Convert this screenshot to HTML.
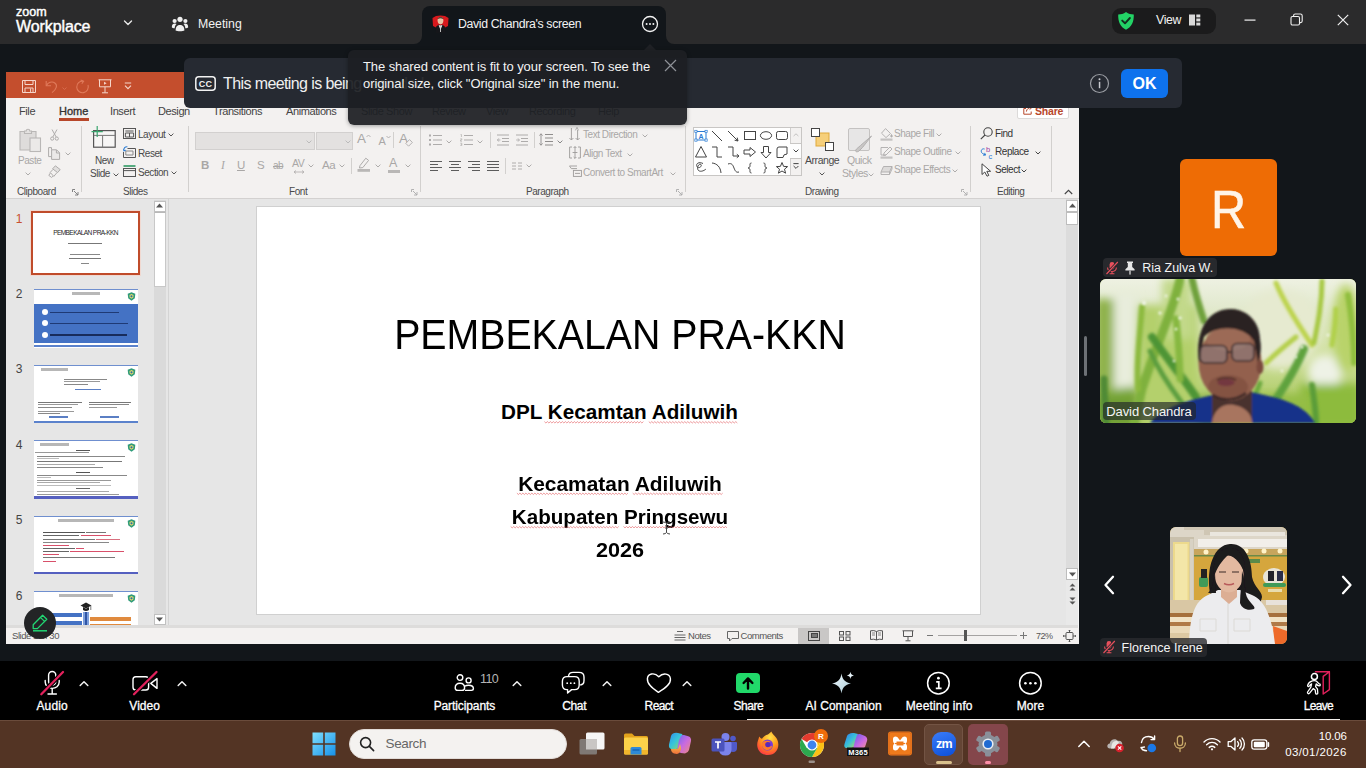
<!DOCTYPE html>
<html>
<head>
<meta charset="utf-8">
<title>Zoom Workplace</title>
<style>
*{box-sizing:border-box;margin:0;padding:0}
html,body{width:1366px;height:768px;overflow:hidden;background:#12161a;font-family:"Liberation Sans",sans-serif;}
.abs{position:absolute}
#root{position:relative;width:1366px;height:768px;overflow:hidden;background:#12161a}
/* ---- top bar ---- */
#topbar{left:0;top:0;width:1366px;height:44px;background:#2b2b2c}
#tab{left:422px;top:6px;width:244px;height:38px;background:#12161a;border-radius:8px 8px 0 0}
.tb-txt{color:#f2f2f2;font-size:12.3px;white-space:nowrap;letter-spacing:-0.35px;line-height:15px}
#viewpill{left:1112px;top:8px;width:104px;height:26px;background:#1b1b1c;border-radius:9px}
/* ---- PPT window ---- */
#ppt{left:6px;top:72px;width:1073px;height:572px;background:#e6e6e6;overflow:hidden}
#ppt-title{left:0;top:0;width:1073px;height:26px;background:#c44e2d}
#ppt-tabs{left:0;top:26px;width:1073px;height:24px;background:#f3f1f0}
#ppt-ribbon{left:0;top:50px;width:1073px;height:77px;background:#f3f1f0;border-bottom:1.500px solid #d3d1d0}
#ppt-status{left:0;top:556px;width:1073px;height:16px;background:#f3f1f0}
.rt{position:absolute;font-size:10px;color:#4a4a4a;white-space:nowrap;letter-spacing:-0.45px;line-height:12px}
.rt.dim{color:#a9a7a6}
.tabt{position:absolute;top:6.5px;font-size:11px;color:#444;white-space:nowrap;letter-spacing:-0.4px;line-height:12px}
.sl{left:251.5px;width:724px;text-align:center;white-space:nowrap;color:#000;line-height:1;transform-origin:50% 50%}
.sl.b{font-weight:bold}
/* ---- banner / tooltip ---- */
#banner{left:184px;top:57.500px;width:998px;height:50px;background:#262a32;border-radius:6px}
#tip{left:347.500px;top:50px;width:339px;height:75px;background:rgba(29,31,35,.935);border-radius:6px;box-shadow:0 1px 4px rgba(0,0,0,.35)}
/* ---- right panel ---- */
.pill{position:absolute;height:18px;background:rgba(41,42,46,.95);border-radius:4px;color:#f5f5f5;font-size:12.5px;white-space:nowrap;line-height:18px}
.ptxt{color:#f5f5f5;font-size:12.500px;line-height:15px;white-space:nowrap;letter-spacing:-0.1px}
/* ---- zoom toolbar ---- */
#ztb{left:0;top:661px;width:1366px;height:59px;background:#000}
.zl{position:absolute;top:38px;font-size:12px;line-height:14px;color:#fff;white-space:nowrap;transform:translateX(-50%);-webkit-text-stroke:0.3px #fff}
/* ---- taskbar ---- */
#task{left:0;top:720px;width:1366px;height:48px;background:#533424;border-top:1px solid #6a4b3b}
</style>
</head>
<body>
<div id="root">

<!-- TOPBAR -->
<div id="topbar" class="abs">
  <!-- zoom workplace logo -->
  <div class="abs" style="left:16px;top:5px;font-size:12.5px;color:#fff;letter-spacing:0px;line-height:14px;-webkit-text-stroke:0.45px #fff">zoom</div>
  <div class="abs" style="left:16px;top:17px;font-size:16px;color:#fff;letter-spacing:-0.1px;line-height:20px;-webkit-text-stroke:0.4px #fff">Workplace</div>
  <svg class="abs" style="left:122px;top:17px" width="12" height="12" viewBox="0 0 12 12"><path d="M2.5 4 L6 7.5 L9.5 4" fill="none" stroke="#e8e8e8" stroke-width="1.4" stroke-linecap="round" stroke-linejoin="round"/></svg>
  <!-- meeting icon -->
  <svg class="abs" style="left:171px;top:15px" width="18" height="18" viewBox="0 0 18 18" fill="#f0f0f0">
    <circle cx="9" cy="4.3" r="2.6"/><circle cx="3.6" cy="6" r="2.1"/><circle cx="14.4" cy="6" r="2.1"/>
    <path d="M4.6 15.5 C4.6 11.6 6.4 10 9 10 C11.6 10 13.4 11.6 13.4 15.5 C12 16.6 6 16.6 4.6 15.5Z"/>
    <path d="M0.8 12.2 C0.8 9.6 2.2 8.6 3.9 8.6 C4.6 8.6 5.2 8.8 5.6 9.1 C4.4 10 3.8 11.4 3.7 13.2 C2.4 13.2 1.3 12.8 0.8 12.2Z"/>
    <path d="M17.2 12.2 C17.2 9.6 15.8 8.6 14.1 8.6 C13.4 8.6 12.8 8.8 12.4 9.1 C13.6 10 14.2 11.4 14.3 13.2 C15.6 13.2 16.7 12.8 17.2 12.2Z"/>
  </svg>
  <div class="abs tb-txt" style="left:198px;top:17px;letter-spacing:0">Meeting</div>
  <!-- tab -->
  <div id="tab" class="abs"></div>
  <svg class="abs" style="left:414px;top:36px" width="8" height="8"><path d="M8 0 L8 8 L0 8 A8 8 0 0 0 8 0Z" fill="#12161a"/></svg>
  <svg class="abs" style="left:666px;top:36px" width="8" height="8"><path d="M0 0 L0 8 L8 8 A8 8 0 0 1 0 0Z" fill="#12161a"/></svg>
  <!-- avatar -->
  <svg class="abs" style="left:432px;top:15px" width="17" height="18" viewBox="0 0 17 18">
    <path d="M0.5 3 L4 1 L8.5 0.5 L13 1 L16.5 3 L16 11 L13 12.5 L4 12.5 L1 11Z" fill="#d8191d"/>
    <ellipse cx="8.5" cy="5.6" rx="2.9" ry="3.7" fill="#e8c4a6"/>
    <path d="M5.6 4 C5.8 1.6 11.2 1.6 11.4 4 C10 3 7 3 5.6 4Z" fill="#2a1c16"/>
    <path d="M3.6 18 L4.2 11.6 L7 9.6 L8.5 10.4 L10 9.6 L12.8 11.6 L13.4 18Z" fill="#15161a"/>
    <path d="M6.6 9.9 L8.5 15 L10.4 9.9 L8.5 10.6Z" fill="#f4f4f4"/>
    <rect x="8.1" y="11" width="0.9" height="6" fill="#d0d0d0"/>
  </svg>
  <div class="abs tb-txt" style="left:458px;top:17px">David Chandra's screen</div>
  <svg class="abs" style="left:640px;top:14px" width="20" height="20" viewBox="0 0 20 20"><circle cx="10" cy="10" r="7.5" fill="none" stroke="#f2f2f2" stroke-width="1.3"/><circle cx="6.6" cy="10" r="1" fill="#f2f2f2"/><circle cx="10" cy="10" r="1" fill="#f2f2f2"/><circle cx="13.4" cy="10" r="1" fill="#f2f2f2"/></svg>
  <!-- view pill -->
  <div id="viewpill" class="abs"></div>
  <svg class="abs" style="left:1117px;top:11px" width="18" height="20" viewBox="0 0 18 20"><path d="M9 1 C11.5 2.8 14 3.4 16.8 3.5 C17 10.5 14.8 15.8 9 18.8 C3.2 15.8 1 10.5 1.2 3.5 C4 3.4 6.5 2.8 9 1Z" fill="#23d366"/><path d="M5.2 9.6 L8 12.3 L12.9 7" fill="none" stroke="#12301f" stroke-width="1.9" stroke-linecap="round" stroke-linejoin="round"/></svg>
  <div class="abs tb-txt" style="left:1156px;top:13px">View</div>
  <svg class="abs" style="left:1189px;top:14px" width="12" height="12" viewBox="0 0 12 12"><rect x="0" y="0.5" width="6" height="11" fill="#d9d9d9"/><rect x="7.3" y="0.5" width="4" height="2.9" fill="#d9d9d9"/><rect x="7.3" y="4.5" width="4" height="2.9" fill="#d9d9d9"/><rect x="7.3" y="8.6" width="4" height="2.9" fill="#d9d9d9"/></svg>
  <!-- window controls -->
  <svg class="abs" style="left:1244px;top:13px" width="14" height="14"><rect x="0.5" y="6.5" width="11" height="1.2" fill="#f0f0f0"/></svg>
  <svg class="abs" style="left:1290px;top:13px" width="14" height="14" viewBox="0 0 14 14"><rect x="1" y="3.5" width="8.5" height="8.5" rx="1.4" fill="none" stroke="#f0f0f0" stroke-width="1.1"/><path d="M3.6 3.3 V2.6 Q3.6 1 5.2 1 H10.4 Q12.2 1 12.2 2.8 V8 Q12.2 9.6 10.6 9.6 H9.8" fill="none" stroke="#f0f0f0" stroke-width="1.1"/></svg>
  <svg class="abs" style="left:1337px;top:14px" width="12" height="12" viewBox="0 0 12 12"><path d="M0.8 0.8 L11.2 11.2 M11.2 0.8 L0.8 11.2" stroke="#f0f0f0" stroke-width="1.2"/></svg>
</div>

<!-- PPT WINDOW -->
<div id="ppt" class="abs">
  <div id="ppt-title" class="abs">
    <!-- save -->
    <svg class="abs" style="left:16px;top:8px" width="14" height="13" viewBox="0 0 14 13" fill="none" stroke="#f6d6cb" stroke-width="1"><path d="M0.5 0.5 H13.5 V12.5 H0.5Z"/><path d="M3 0.5 V4.5 H11 V0.5"/><path d="M3 12.5 V8 H11 V12.5"/><path d="M8.6 8.5 V12"/></svg>
    <!-- undo (dim) -->
    <svg class="abs" style="left:39px;top:8px" width="14" height="14" viewBox="0 0 14 14" fill="none" stroke="#e07a5b" stroke-width="1.1"><path d="M1.2 1 V5.8 H6"/><path d="M1.5 5.6 C3 2.4 7 1 9.8 3 C12.6 5 12 9 7 12.6"/></svg>
    <svg class="abs" style="left:56px;top:15px" width="5" height="3"><path d="M0.5 0.5 L2.5 2.5 L4.5 0.5" fill="none" stroke="#d96e50" stroke-width="0.9"/></svg>
    <!-- redo (dim) -->
    <svg class="abs" style="left:69px;top:7px" width="15" height="15" viewBox="0 0 15 15" fill="none" stroke="#e07a5b" stroke-width="1.1"><path d="M8.2 2.2 A5.8 5.8 0 1 0 13 6"/><path d="M5.6 1 L8.6 2.2 L6.8 4.8"/></svg>
    <!-- present -->
    <svg class="abs" style="left:92px;top:7px" width="14" height="15" viewBox="0 0 14 15" fill="none" stroke="#f6d6cb" stroke-width="1"><path d="M0.5 0.8 H13.5"/><path d="M1.5 0.8 V7.8 H12.5 V0.8"/><path d="M7 7.8 V13.6 M4 13.8 H10"/><path d="M6 2.8 L8.6 4.3 L6 5.8Z" fill="#f6d6cb" stroke="none"/></svg>
    <!-- customize -->
    <svg class="abs" style="left:118px;top:10px" width="8" height="8" viewBox="0 0 8 8" fill="none" stroke="#f6d6cb" stroke-width="1"><path d="M0.8 1 H7.2"/><path d="M1 3.6 L4 6.6 L7 3.6" stroke-width="1.1"/></svg>
  </div>
  <div id="ppt-tabs" class="abs">
    <div class="tabt" style="left:13px">File</div>
    <div class="tabt" style="left:53px;color:#333;letter-spacing:0;-webkit-text-stroke:0.35px #333">Home</div>
    <div class="abs" style="left:53px;top:20px;width:30px;height:3px;background:#b7472a"></div>
    <div class="tabt" style="left:104px">Insert</div>
    <div class="tabt" style="left:152px">Design</div>
    <div class="tabt" style="left:207px">Transitions</div>
    <div class="tabt" style="left:280px">Animations</div>
    <div class="tabt" style="left:355px">Slide Show</div>
    <div class="tabt" style="left:426px">Review</div>
    <div class="tabt" style="left:480px">View</div>
    <div class="tabt" style="left:523px">Recording</div>
    <div class="tabt" style="left:592px">Help</div>
    <!-- share -->
    <div class="abs" style="left:1011px;top:3px;width:52px;height:18px;background:#fff;border:1px solid #dcdad9;border-radius:2px"></div>
    <svg class="abs" style="left:1017px;top:7px" width="10" height="10" viewBox="0 0 10 10" fill="none" stroke="#b7472a" stroke-width="1"><path d="M3 3.5 H0.8 V9.2 H8.2 V6.5"/><path d="M3.4 6.6 C3.6 4 5.4 2.6 8.6 2.6 M6.6 0.6 L8.8 2.6 L6.6 4.6"/></svg>
    <div class="abs" style="left:1029px;top:5.5px;font-size:10.5px;font-weight:bold;color:#b7472a;line-height:14px;letter-spacing:-0.2px">Share</div>
  </div>
  <div id="ppt-ribbon" class="abs">
    <!-- CLIPBOARD -->
    <svg class="abs" style="left:13px;top:6px" width="23" height="25" viewBox="0 0 23 25" fill="none" stroke="#b9b7b6" stroke-width="1.1"><path d="M1 3.500 H17 V22 H1Z" fill="#dedcdb"/><path d="M5.5 5.5 V3 H7.2 C7.2 0.6 10.8 0.6 10.8 3 H12.5 V5.5Z" fill="#e4e2e1"/><rect x="11" y="10" width="10.5" height="13.5" fill="#ebe9e8"/></svg>
    <div class="rt dim" style="left:12px;top:33px">Paste</div>
    <svg class="abs" style="left:19px;top:50px" width="6" height="4"><path d="M0.6 0.6 L3 3 L5.4 0.6" fill="none" stroke="#aeacab" stroke-width="1"/></svg>
    <svg class="abs" style="left:44px;top:7px" width="9" height="12" viewBox="0 0 9 12" fill="none" stroke="#aeacab" stroke-width="1"><path d="M2 0.5 L6.2 8 M7 0.5 L2.8 8"/><circle cx="2.2" cy="9.6" r="1.6"/><circle cx="6.8" cy="9.6" r="1.6"/></svg>
    <svg class="abs" style="left:42px;top:25px" width="13" height="13" viewBox="0 0 13 13" fill="none" stroke="#aeacab" stroke-width="1"><path d="M3.5 2.8 V0.6 H0.6 V9.6 H3.4"/><path d="M3.6 2.8 H8.6 L11.6 5.8 V12.4 H3.6Z" fill="#ebe9e8"/><path d="M8.4 3 V6 H11.4"/></svg>
    <svg class="abs" style="left:59px;top:30px" width="6" height="4"><path d="M0.6 0.6 L3 3 L5.4 0.6" fill="none" stroke="#aeacab" stroke-width="1"/></svg>
    <svg class="abs" style="left:42px;top:43px" width="13" height="13" viewBox="0 0 13 13" fill="none" stroke="#aeacab" stroke-width="1"><path d="M7.4 0.8 L12.2 4.6 L9.6 7.6 L4.6 3.8Z" fill="#e1dfde"/><path d="M5 4.4 L2.2 7.4 L5.8 11.4 L9 7.6"/><path d="M2.4 8 L0.8 10.4 L3.6 12.4 L5.2 11"/></svg>
    <div class="rt" style="left:11px;top:64px">Clipboard</div>
    <svg class="abs" style="left:66px;top:67px" width="7" height="7" viewBox="0 0 7 7" fill="none" stroke="#777" stroke-width="0.9"><path d="M0.5 3 V0.5 H3"/><path d="M2 2 L6 6 M6 3 V6 H3"/></svg>
    <div class="abs" style="left:75px;top:4px;width:1px;height:66px;background:#d2d0ce"></div>
    <!-- SLIDES -->
    <svg class="abs" style="left:85px;top:4px" width="25" height="22" viewBox="0 0 25 22" fill="none"><rect x="2.6" y="4.6" width="21.6" height="16.6" stroke="#555" stroke-width="1.2" fill="#f7f6f5"/><path d="M2.8 9.4 H24 M11.6 9.6 V21" stroke="#777" stroke-width="1"/><path d="M6.2 0 V11 M0.5 5.6 H11.8" stroke="#3aa56e" stroke-width="1.2"/></svg>
    <div class="rt" style="left:89px;top:33.3px">New</div>
    <div class="rt" style="left:84px;top:46px">Slide</div>
    <svg class="abs" style="left:107px;top:51px" width="6" height="4"><path d="M0.6 0.6 L3 3 L5.4 0.6" fill="none" stroke="#555" stroke-width="1"/></svg>
    <svg class="abs" style="left:117px;top:6px" width="13" height="11" viewBox="0 0 13 11" fill="none" stroke="#555" stroke-width="1"><rect x="0.5" y="0.5" width="12" height="10"/><path d="M2.4 3 H10.6 M2.4 5 H10.6 M6.5 5 V9"/><path d="M2.4 5 V9 H10.6 V5"/></svg>
    <div class="rt" style="left:132px;top:7.3px">Layout</div>
    <svg class="abs" style="left:162px;top:11px" width="6" height="4"><path d="M0.6 0.6 L3 3 L5.4 0.6" fill="none" stroke="#555" stroke-width="1"/></svg>
    <svg class="abs" style="left:117px;top:24px" width="13" height="12" viewBox="0 0 13 12" fill="none" stroke="#555" stroke-width="1"><path d="M4.5 2.5 H12.5 V11.5 H0.5 V6"/><path d="M2.8 5 H10 V9 H2.8Z" stroke="#888"/><path d="M4.4 0.8 C2 0.6 0.6 2 0.8 4.4 M0.6 2.8 L0.9 4.8 L2.8 4.2" stroke="#2b7cd3" stroke-width="1.1"/></svg>
    <div class="rt" style="left:132px;top:26.3px">Reset</div>
    <svg class="abs" style="left:117px;top:43px" width="13" height="12" viewBox="0 0 13 12" fill="none" stroke="#555" stroke-width="1"><path d="M0.5 1 H12.5" stroke="#2f9a63" stroke-width="1.6"/><rect x="0.5" y="3.5" width="12" height="8"/><path d="M0.8 5.6 H12.2"/></svg>
    <div class="rt" style="left:132px;top:45.3px">Section</div>
    <svg class="abs" style="left:165px;top:49px" width="6" height="4"><path d="M0.6 0.6 L3 3 L5.4 0.6" fill="none" stroke="#555" stroke-width="1"/></svg>
    <div class="rt" style="left:117px;top:64px">Slides</div>
    <div class="abs" style="left:182px;top:4px;width:1px;height:66px;background:#d2d0ce"></div>
    <!-- FONT -->
    <div class="abs" style="left:189px;top:10px;width:120px;height:18px;background:#e3e1e0;border:1px solid #d2d0cf"></div>
    <svg class="abs" style="left:300px;top:18px" width="6" height="4"><path d="M0.6 0.6 L3 3 L5.4 0.6" fill="none" stroke="#bbb" stroke-width="1"/></svg>
    <div class="abs" style="left:310px;top:10px;width:37px;height:18px;background:#e3e1e0;border:1px solid #d2d0cf"></div>
    <svg class="abs" style="left:339px;top:18px" width="6" height="4"><path d="M0.6 0.6 L3 3 L5.4 0.6" fill="none" stroke="#bbb" stroke-width="1"/></svg>
    <div class="rt dim" style="left:351px;top:11px;font-size:13.500px;letter-spacing:0">A</div><svg class="abs" style="left:360px;top:12px" width="5" height="4"><path d="M0.5 3 L2.5 1 L4.5 3" fill="none" stroke="#aeacab" stroke-width="0.9"/></svg>
    <div class="rt dim" style="left:372.500px;top:13px;font-size:11px;letter-spacing:0">A</div><svg class="abs" style="left:380px;top:13px" width="5" height="4"><path d="M0.5 1 L2.5 3 L4.5 1" fill="none" stroke="#aeacab" stroke-width="0.9"/></svg>
    <div class="abs" style="left:387px;top:10px;width:1px;height:16px;background:#d2d0ce"></div>
    <div class="rt dim" style="left:393px;top:11px;font-size:13.500px;letter-spacing:0">A</div>
    <svg class="abs" style="left:399px;top:17px" width="8" height="8" viewBox="0 0 8 8" fill="#f3f1f0" stroke="#aeacab" stroke-width="0.9"><path d="M4.5 0.6 L7.4 3.4 L3.6 7.2 L0.8 4.4Z"/></svg>
    <div class="rt dim" style="left:195px;top:37px;font-size:11.5px;font-weight:bold">B</div>
    <div class="rt dim" style="left:215px;top:37px;font-size:11.5px;font-style:italic;font-family:'Liberation Serif',serif">I</div>
    <div class="rt dim" style="left:231px;top:37px;font-size:11.5px;text-decoration:underline">U</div>
    <div class="rt dim" style="left:251px;top:37px;font-size:11.5px">S</div>
    <div class="rt dim" style="left:267px;top:38px;font-size:10px;text-decoration:line-through">ab</div>
    <div class="rt dim" style="left:286px;top:35px;font-size:10.5px">AV</div>
    <svg class="abs" style="left:287px;top:48px" width="12" height="4"><path d="M1 2 H11 M3 0.5 L1 2 L3 3.5 M9 0.5 L11 2 L9 3.5" fill="none" stroke="#aeacab" stroke-width="0.8"/></svg>
    <svg class="abs" style="left:302px;top:42px" width="6" height="4"><path d="M0.6 0.6 L3 3 L5.4 0.6" fill="none" stroke="#aeacab" stroke-width="1"/></svg>
    <div class="rt dim" style="left:316px;top:37px;font-size:11.5px">Aa</div>
    <svg class="abs" style="left:333px;top:42px" width="6" height="4"><path d="M0.6 0.6 L3 3 L5.4 0.6" fill="none" stroke="#aeacab" stroke-width="1"/></svg>
    <div class="abs" style="left:345px;top:36px;width:1px;height:16px;background:#d2d0ce"></div>
    <svg class="abs" style="left:351px;top:35px" width="14" height="15" viewBox="0 0 14 15"><path d="M3 8.6 L8.8 1.2 L11.6 3.4 L5.8 10.6 L2.4 11Z" fill="none" stroke="#aeacab" stroke-width="1"/><rect x="0.5" y="12" width="12.5" height="2.8" fill="#b9b7b6"/></svg>
    <svg class="abs" style="left:369px;top:42px" width="6" height="4"><path d="M0.6 0.6 L3 3 L5.4 0.6" fill="none" stroke="#aeacab" stroke-width="1"/></svg>
    <div class="rt dim" style="left:383px;top:35px;font-size:12.5px;letter-spacing:0">A</div>
    <div class="abs" style="left:382px;top:48px;width:12px;height:3px;background:#b9b7b6"></div>
    <svg class="abs" style="left:399px;top:42px" width="6" height="4"><path d="M0.6 0.6 L3 3 L5.4 0.6" fill="none" stroke="#aeacab" stroke-width="1"/></svg>
    <div class="rt" style="left:283px;top:64px">Font</div>
    <svg class="abs" style="left:405px;top:67px" width="7" height="7" viewBox="0 0 7 7" fill="none" stroke="#aaa" stroke-width="0.9"><path d="M0.5 3 V0.5 H3"/><path d="M2 2 L6 6 M6 3 V6 H3"/></svg>
    <div class="abs" style="left:414px;top:4px;width:1px;height:66px;background:#d2d0ce"></div>
    <!-- PARAGRAPH -->
    <svg class="abs" style="left:423px;top:12px" width="13" height="12" viewBox="0 0 13 12" stroke="#aeacab" fill="#aeacab"><rect x="0" y="0.5" width="2" height="2" stroke="none"/><rect x="0" y="5" width="2" height="2" stroke="none"/><rect x="0" y="9.5" width="2" height="2" stroke="none"/><path d="M4 1.5 H13 M4 6 H13 M4 10.5 H13" stroke-width="1"/></svg>
    <svg class="abs" style="left:440px;top:18px" width="6" height="4"><path d="M0.6 0.6 L3 3 L5.4 0.6" fill="none" stroke="#aeacab" stroke-width="1"/></svg>
    <svg class="abs" style="left:454px;top:12px" width="13" height="12" viewBox="0 0 13 12" stroke="#aeacab" fill="none"><path d="M4 1.5 H13 M4 6 H13 M4 10.5 H13" stroke-width="1"/><path d="M0.6 0.4 H1.4 V3 M0.3 4.8 H1.8 V6 H0.4 V7.2 H2 M0.3 9.2 H1.8 V11.6 H0.3 M0.8 10.4 H1.8" stroke-width="0.7"/></svg>
    <svg class="abs" style="left:471px;top:18px" width="6" height="4"><path d="M0.6 0.6 L3 3 L5.4 0.6" fill="none" stroke="#aeacab" stroke-width="1"/></svg>
    <div class="abs" style="left:484px;top:10px;width:1px;height:16px;background:#d2d0ce"></div>
    <svg class="abs" style="left:491px;top:12px" width="12" height="12" viewBox="0 0 12 12" stroke="#aeacab" fill="none"><path d="M0 1 H12 M5 4.5 H12 M5 7.5 H12 M0 11 H12" stroke-width="1"/><path d="M3.4 6 H0.4 M1.8 4.4 L0.4 6 L1.8 7.6" stroke-width="0.9"/></svg>
    <svg class="abs" style="left:510px;top:12px" width="12" height="12" viewBox="0 0 12 12" stroke="#aeacab" fill="none"><path d="M0 1 H12 M5 4.5 H12 M5 7.5 H12 M0 11 H12" stroke-width="1"/><path d="M0.2 6 H3.4 M2 4.4 L3.4 6 L2 7.6" stroke-width="0.9"/></svg>
    <div class="abs" style="left:528px;top:10px;width:1px;height:16px;background:#d2d0ce"></div>
    <svg class="abs" style="left:533px;top:11px" width="14" height="13" viewBox="0 0 14 13" stroke="#8f8d8c" fill="none"><path d="M6 1.5 H14 M6 5 H14 M6 8.5 H14 M6 12 H14" stroke-width="1"/><path d="M2 0.8 V12.2 M0.4 2.6 L2 0.8 L3.6 2.6 M0.4 10.4 L2 12.2 L3.6 10.4" stroke-width="0.9"/></svg>
    <svg class="abs" style="left:551px;top:18px" width="6" height="4"><path d="M0.6 0.6 L3 3 L5.4 0.6" fill="none" stroke="#888" stroke-width="1"/></svg>
    <svg class="abs" style="left:424px;top:38px" width="12" height="12"><path d="M0 1.5 H12 M0 4.5 H8 M0 7.5 H12 M0 10.5 H8" stroke="#5c5c5c" stroke-width="1" fill="none"/></svg><svg class="abs" style="left:443px;top:38px" width="12" height="12"><path d="M0 1.5 H12 M2 4.5 H10 M0 7.5 H12 M2 10.5 H10" stroke="#5c5c5c" stroke-width="1" fill="none"/></svg><svg class="abs" style="left:462px;top:38px" width="12" height="12"><path d="M0 1.5 H12 M4 4.5 H12 M0 7.5 H12 M4 10.5 H12" stroke="#5c5c5c" stroke-width="1" fill="none"/></svg><svg class="abs" style="left:481px;top:38px" width="12" height="12"><path d="M0 1.5 H12 M0 4.5 H12 M0 7.5 H12 M0 10.5 H12" stroke="#5c5c5c" stroke-width="1" fill="none"/></svg>
    <div class="abs" style="left:499px;top:36px;width:1px;height:16px;background:#d2d0ce"></div>
    <svg class="abs" style="left:506px;top:40px" width="10" height="8"><path d="M0 1 H4 M6 1 H10 M0 4 H4 M6 4 H10 M0 7 H4 M6 7 H10" stroke="#aeacab" stroke-width="1"/></svg>
    <svg class="abs" style="left:520px;top:42px" width="6" height="4"><path d="M0.6 0.6 L3 3 L5.4 0.6" fill="none" stroke="#aeacab" stroke-width="1"/></svg>
    <svg class="abs" style="left:563px;top:5px" width="12" height="14" viewBox="0 0 12 14" stroke="#9c9a99" fill="none" stroke-width="0.9"><path d="M2.4 1 V13 M0.4 11 L2.4 13 L4.4 11 M8.6 3 V13 M6.6 11 L8.6 13 L10.6 11"/><path d="M6.4 3.4 L8 0.4 L9.6 3.4" stroke-width="0.7"/></svg>
    <div class="rt dim" style="left:577px;top:7px">Text Direction</div><svg class="abs" style="left:636px;top:12px" width="6" height="4"><path d="M0.6 0.6 L3 3 L5.4 0.6" fill="none" stroke="#aeacab" stroke-width="1"/></svg>
    <svg class="abs" style="left:563px;top:24px" width="12" height="13" viewBox="0 0 12 13" stroke="#9c9a99" fill="none" stroke-width="0.9"><path d="M3 1 H0.6 V12 H3 M9 1 H11.4 V12 H9"/><path d="M6 0.6 V12.4 M4.6 2 L6 0.6 L7.4 2 M4.6 11 L6 12.4 L7.4 11"/><path d="M3.6 6.5 H8.4"/></svg>
    <div class="rt dim" style="left:577px;top:26px">Align Text</div><svg class="abs" style="left:621px;top:31px" width="6" height="4"><path d="M0.6 0.6 L3 3 L5.4 0.6" fill="none" stroke="#aeacab" stroke-width="1"/></svg>
    <svg class="abs" style="left:563px;top:43px" width="13" height="12" viewBox="0 0 13 12" stroke="#9c9a99" fill="none" stroke-width="0.9"><path d="M0.4 1 H8 M2.4 3.6 H8 M2.4 3.6 L0.6 1.2"/><rect x="4.4" y="5.4" width="8" height="6"/><path d="M6 8.4 H11"/></svg>
    <div class="rt dim" style="left:577px;top:45px">Convert to SmartArt</div><svg class="abs" style="left:664px;top:50px" width="6" height="4"><path d="M0.6 0.6 L3 3 L5.4 0.6" fill="none" stroke="#aeacab" stroke-width="1"/></svg>
    <div class="rt" style="left:520px;top:64px">Paragraph</div>
    <svg class="abs" style="left:670px;top:67px" width="7" height="7" viewBox="0 0 7 7" fill="none" stroke="#aaa" stroke-width="0.9"><path d="M0.5 3 V0.5 H3"/><path d="M2 2 L6 6 M6 3 V6 H3"/></svg>
    <div class="abs" style="left:679px;top:4px;width:1px;height:66px;background:#d2d0ce"></div>
    <!-- DRAWING : shapes gallery -->
    <div class="abs" style="left:687.300px;top:5px;width:108.400px;height:49px;background:#fff;border:1px solid #c8c6c4"></div>
    <div class="abs" style="left:784.200px;top:6px;width:10.500px;height:47px;background:#f3f1f0;border-left:1px solid #d0cecd"></div>
    <div class="abs" style="left:784.200px;top:21px;width:10.500px;height:16px;border-top:1px solid #c8c6c4;border-bottom:1px solid #c8c6c4;background:#fdfdfd"></div>
    <svg class="abs" style="left:786.500px;top:11px" width="6" height="4"><path d="M0.6 3 L3 0.8 L5.4 3" fill="none" stroke="#c3c1c0" stroke-width="1"/></svg>
    <svg class="abs" style="left:787px;top:27px" width="6" height="4"><path d="M0.6 0.6 L3 3 L5.4 0.6" fill="none" stroke="#444" stroke-width="1"/></svg>
    <svg class="abs" style="left:786.500px;top:41px" width="6" height="7"><path d="M0.4 0.6 H5.6" stroke="#444" stroke-width="1"/><path d="M0.6 3 L3 5.4 L5.4 3" fill="none" stroke="#444" stroke-width="1"/></svg>
    <svg class="abs" style="left:686.600px;top:6px" width="96" height="47" viewBox="0 0 96 47" fill="none" stroke="#444" stroke-width="1">
      <rect x="3" y="3.5" width="10" height="8.5" stroke="#2b7cd3"/><text x="8" y="11" font-family="Liberation Sans" font-size="7" fill="#2b7cd3" stroke="none" text-anchor="middle" font-weight="bold">A</text>
      <rect x="1.8" y="2.3" width="2.2" height="2.2" fill="#fff" stroke="#2b7cd3" stroke-width="0.7"/><rect x="12" y="2.3" width="2.2" height="2.2" fill="#fff" stroke="#2b7cd3" stroke-width="0.7"/><rect x="1.8" y="11" width="2.2" height="2.2" fill="#fff" stroke="#2b7cd3" stroke-width="0.7"/><rect x="12" y="11" width="2.2" height="2.2" fill="#fff" stroke="#2b7cd3" stroke-width="0.7"/>
      <path d="M19 3 L29 13"/>
      <path d="M35 3 L45 13 M45 13 L41.6 12.2 M45 13 L44.2 9.6"/>
      <rect x="51.500" y="3.5" width="11" height="8"/>
      <ellipse cx="73" cy="7.5" rx="5.6" ry="3.8"/>
      <rect x="83.500" y="3.5" width="11" height="8" rx="1.8"/>
      <path d="M8 18.500 L13.5 29 H2.5Z"/>
      <path d="M19 19 H24 V29 H29"/>
      <path d="M35 19 H40 V28 H46 M46 28 L43.8 26.200 M46 28 L43.8 29.800"/>
      <path d="M51 22 H57 V19.500 L62.500 24 L57 28.500 V26 H51Z"/>
      <path d="M70.500 18.500 H75.500 V24.500 H78 L73 30 L68 24.500 H70.500Z"/>
      <path d="M84 21 Q84 19 86 19 H94 V26 Q90 26 90 29.500 H84Z"/>
      <path d="M10 35.500 C6 33.500 2.500 35.500 4 38.500 C5.500 41.500 9.500 38 8 36.500 C6 35 3 40 5.500 42.500 C8 44.500 12 42 13 41"/>
      <path d="M19 35 C24 35.500 27.500 39 28 45"/>
      <path d="M35 36 C39 34.500 40 37.500 41 40 C42 42.500 43 45 46 44"/>
      <path d="M58.500 35 C56.500 35 57 36.500 57 37.800 C57 39.500 56 39.800 55 40 C56 40.200 57 40.500 57 42.200 C57 43.500 56.500 45 58.500 45"/>
      <path d="M70.500 35 C72.500 35 72 36.500 72 37.800 C72 39.500 73 39.800 74 40 C73 40.200 72 40.500 72 42.200 C72 43.500 72.500 45 70.500 45"/>
      <path d="M89 34.500 L90.600 38.400 L94.600 38.600 L91.500 41.200 L92.600 45.200 L89 43 L85.400 45.200 L86.500 41.200 L83.400 38.600 L87.400 38.400Z"/>
    </svg>
    <!-- arrange -->
    <svg class="abs" style="left:805px;top:6px" width="23" height="23" viewBox="0 0 23 23"><rect x="5" y="5" width="13" height="13" fill="#f6cf7a" stroke="#e0a93a" stroke-width="1"/><rect x="0.5" y="0.5" width="8" height="8" fill="#fff" stroke="#444" stroke-width="1"/><rect x="14.500" y="14.500" width="8" height="8" fill="#fff" stroke="#444" stroke-width="1"/></svg>
    <div class="rt" style="left:799px;top:32px;font-size:10.500px">Arrange</div>
    <svg class="abs" style="left:813px;top:50px" width="6" height="4"><path d="M0.6 0.6 L3 3 L5.4 0.6" fill="none" stroke="#555" stroke-width="1"/></svg>
    <!-- quick styles -->
    <svg class="abs" style="left:842px;top:6px" width="24" height="25" viewBox="0 0 24 25"><rect x="0.5" y="0.5" width="21" height="22" rx="1.500" fill="#e7e6e6" stroke="#c4c2c1" stroke-width="1"/><path d="M23.500 8 L14.500 19.500 L11 23 C8.500 24.800 6.500 23.500 8.500 21 L12.500 17.500Z" fill="#c9c7c6" stroke="#aeacab" stroke-width="0.9"/></svg>
    <div class="rt dim" style="left:841px;top:32px;font-size:10.500px">Quick</div>
    <div class="rt dim" style="left:836px;top:45px;font-size:10.500px">Styles</div>
    <svg class="abs" style="left:862px;top:51px" width="6" height="4"><path d="M0.6 0.6 L3 3 L5.4 0.6" fill="none" stroke="#aeacab" stroke-width="1"/></svg>
    <svg class="abs" style="left:874px;top:6px" width="13" height="13" viewBox="0 0 13 13" fill="none" stroke="#aeacab" stroke-width="0.9"><path d="M5.500 0.600 L10.500 5.500 L6 9.600 L1.500 5.200Z"/><path d="M11.500 6.500 C12.500 8 12.500 9 11.500 9 C10.500 9 10.500 8 11.500 6.500Z" fill="#aeacab"/><rect x="0.500" y="10.500" width="12" height="2.200" fill="#c4c2c1" stroke="none"/></svg>
    <div class="rt dim" style="left:888px;top:6px">Shape Fill</div><svg class="abs" style="left:930px;top:11px" width="6" height="4"><path d="M0.6 0.6 L3 3 L5.4 0.6" fill="none" stroke="#aeacab" stroke-width="1"/></svg>
    <svg class="abs" style="left:874px;top:24px" width="13" height="13" viewBox="0 0 13 13" fill="none" stroke="#aeacab" stroke-width="0.9"><path d="M1 1.500 H8 M1 1.500 V9 H6"/><path d="M10 1 L12 3 L6 9 L3.600 9.400 L4 7Z"/><rect x="0.500" y="10.500" width="12" height="2.200" fill="#c4c2c1" stroke="none"/></svg>
    <div class="rt dim" style="left:888px;top:24px">Shape Outline</div><svg class="abs" style="left:949px;top:29px" width="6" height="4"><path d="M0.6 0.6 L3 3 L5.4 0.6" fill="none" stroke="#aeacab" stroke-width="1"/></svg>
    <svg class="abs" style="left:874px;top:43px" width="13" height="12" viewBox="0 0 13 12" fill="#dddbda" stroke="#aeacab" stroke-width="0.9"><path d="M3.500 1.500 H12 L9.500 7 H1Z"/><path d="M1 7 V9.500 H9.500 V7 M9.500 9.500 L12 4 V1.500" fill="none"/></svg>
    <div class="rt dim" style="left:888px;top:42px">Shape Effects</div><svg class="abs" style="left:946px;top:47px" width="6" height="4"><path d="M0.6 0.6 L3 3 L5.4 0.6" fill="none" stroke="#aeacab" stroke-width="1"/></svg>
    <div class="rt" style="left:799px;top:64px">Drawing</div>
    <svg class="abs" style="left:955px;top:67px" width="7" height="7" viewBox="0 0 7 7" fill="none" stroke="#aaa" stroke-width="0.9"><path d="M0.5 3 V0.5 H3"/><path d="M2 2 L6 6 M6 3 V6 H3"/></svg>
    <div class="abs" style="left:964px;top:4px;width:1px;height:66px;background:#d2d0ce"></div>
    <!-- EDITING -->
    <svg class="abs" style="left:974px;top:5px" width="13" height="13" viewBox="0 0 13 13" fill="none" stroke="#444" stroke-width="1.100"><circle cx="8" cy="5" r="4.200"/><path d="M5 8 L0.800 12.200"/></svg>
    <div class="rt" style="left:989px;top:6px;color:#333">Find</div>
    <svg class="abs" style="left:974px;top:23px" width="14" height="14" viewBox="0 0 14 14" fill="none"><text x="6" y="6.500" font-family="Liberation Sans" font-size="7.500" fill="#a33aa0">b</text><text x="8.500" y="13.500" font-family="Liberation Sans" font-size="7.500" fill="#2b7cd3">c</text><path d="M4.600 4 C1.500 3 0 6.500 2.500 8.500 L5.500 10 M5.500 10 L3.200 10.300 M5.500 10 L4.600 7.900" stroke="#2b7cd3" stroke-width="1"/></svg>
    <div class="rt" style="left:989px;top:24px;color:#333">Replace</div><svg class="abs" style="left:1029px;top:29px" width="6" height="4"><path d="M0.6 0.6 L3 3 L5.4 0.6" fill="none" stroke="#444" stroke-width="1"/></svg>
    <svg class="abs" style="left:975px;top:41px" width="11" height="14" viewBox="0 0 11 14" fill="#fff" stroke="#444" stroke-width="1"><path d="M1 0.800 V11.500 L3.800 9 L6 13.200 L7.800 12.400 L5.800 8.300 H9.600Z"/></svg>
    <div class="rt" style="left:989px;top:42px;color:#333">Select</div><svg class="abs" style="left:1015px;top:47px" width="6" height="4"><path d="M0.6 0.6 L3 3 L5.4 0.6" fill="none" stroke="#444" stroke-width="1"/></svg>
    <div class="rt" style="left:991px;top:64px">Editing</div>
    <div class="abs" style="left:1045px;top:4px;width:1px;height:66px;background:#d2d0ce"></div>
    <svg class="abs" style="left:1058px;top:67px" width="9" height="6"><path d="M0.800 5 L4.500 1.300 L8.200 5" fill="none" stroke="#444" stroke-width="1.100"/></svg>
  </div>
  <div class="abs" style="left:0;top:127px;width:162px;height:429px;background:#e6e6e6"></div>
  <div class="abs" style="left:162px;top:127px;width:1px;height:429px;background:#d4d4d4"></div>
  <div class="abs" style="left:163px;top:127px;width:896px;height:426px;background:#e6e6e6"></div>
  <div class="abs" style="left:0;top:553px;width:1073px;height:3px;background:#dddcdb"></div>
  <div class="abs" style="left:8px;top:139.5px;width:10px;text-align:center;font-size:12px;color:#c8502f;line-height:14px">1</div><div class="abs" style="left:8px;top:214.9px;width:10px;text-align:center;font-size:12px;color:#444;line-height:14px">2</div><div class="abs" style="left:8px;top:290.3px;width:10px;text-align:center;font-size:12px;color:#444;line-height:14px">3</div><div class="abs" style="left:8px;top:365.7px;width:10px;text-align:center;font-size:12px;color:#444;line-height:14px">4</div><div class="abs" style="left:8px;top:441.1px;width:10px;text-align:center;font-size:12px;color:#444;line-height:14px">5</div><div class="abs" style="left:8px;top:516.5px;width:10px;text-align:center;font-size:12px;color:#444;line-height:14px">6</div>
  <!-- thumb scrollbar -->
  <div class="abs" style="left:148px;top:128px;width:11.700px;height:425px;background:#dadada"></div>
  <div class="abs" style="left:148px;top:128.500px;width:11.700px;height:11px;background:#fff;border:1px solid #c0c0c0"></div>
  <svg class="abs" style="left:150px;top:131px" width="7" height="5"><path d="M0 4.500 L3.500 0.500 L7 4.500Z" fill="#555"/></svg>
  <div class="abs" style="left:148px;top:139.500px;width:11.700px;height:75px;background:#fff;border:1px solid #c8c8c8;border-top:1.500px solid #b8b8b8"></div>
  <div class="abs" style="left:148px;top:542px;width:11.700px;height:11px;background:#fff;border:1px solid #c0c0c0"></div>
  <svg class="abs" style="left:150px;top:545px" width="7" height="5"><path d="M0 0.500 L3.500 4.500 L7 0.500Z" fill="#555"/></svg>
  <!-- thumb 1 (selected) -->
  <div class="abs" style="left:25px;top:139px;width:109px;height:64px;background:#fff;border:2.500px solid #c04c2b;box-shadow:0 0 0 1px #f0d9d1"></div>
  <div class="abs" style="left:47px;top:156.500px;width:65px;text-align:center;font-size:6.600px;line-height:8px;color:#262626;letter-spacing:-0.620px;white-space:nowrap">PEMBEKALAN PRA-KKN</div>
  <div class="abs" style="left:62px;top:171px;width:34px;height:1px;background:#777"></div><div class="abs" style="left:64px;top:181.5px;width:30px;height:1px;background:#888"></div><div class="abs" style="left:63px;top:186px;width:32px;height:1px;background:#777"></div><div class="abs" style="left:75px;top:190.5px;width:8px;height:1px;background:#888"></div>
  <!-- thumb 2 -->
  <div class="abs" style="left:27.500px;top:217.400px;width:104px;height:58.500px;background:#fff;overflow:hidden">
    <div class="abs" style="left:0;top:0;width:104px;height:1px;background:#6f8fcf"></div>
    <div class="abs" style="left:38px;top:2.500px;width:28px;height:3px;background:#9a9a9a;opacity:.7"></div>
    <div class="abs" style="left:0;top:14.500px;width:104px;height:39px;background:#4472c4"></div>
    <div class="abs" style="left:0;top:55.500px;width:104px;height:2px;background:#5b82cc"></div>
    <div class="abs" style="left:8px;top:20px;width:6px;height:6px;border-radius:50%;background:#fff"></div>
    <div class="abs" style="left:8px;top:31px;width:6px;height:6px;border-radius:50%;background:#fff"></div>
    <div class="abs" style="left:8px;top:42.500px;width:6px;height:6px;border-radius:50%;background:#fff"></div>
    <div class="abs" style="left:16px;top:22.500px;width:69px;height:1.500px;background:#1f3a75"></div>
    <div class="abs" style="left:16px;top:33.500px;width:78px;height:1.500px;background:#1f3a75"></div>
    <div class="abs" style="left:16px;top:45px;width:77px;height:1.800px;background:#182c5c"></div>
  </div>
  <svg class="abs" style="left:120.5px;top:220px" width="9" height="9" viewBox="0 0 9 9"><path d="M4.500 0.300 L8.300 1.800 L7.800 6.200 L4.500 8.700 L1.200 6.200 L0.700 1.800Z" fill="#2f9b7a"/><path d="M2.500 3 L4.500 2 L6.500 3 L6.300 5.500 L4.500 6.800 L2.700 5.500Z" fill="#e8dc6a"/><circle cx="4.500" cy="4.300" r="1.100" fill="#2a6fa8"/></svg>
  <!-- thumb 3 -->
  <div class="abs" style="left:27.500px;top:292.800px;width:104px;height:58.500px;background:#fff;overflow:hidden">
    <div class="abs" style="left:0;top:0;width:104px;height:1px;background:#6f8fcf"></div>
    <div class="abs" style="left:7px;top:3.500px;width:27px;height:3px;background:#999;opacity:.7"></div>
    <div class="abs" style="left:30px;top:14px;width:43px;height:1px;background:#888"></div><div class="abs" style="left:30px;top:16.5px;width:36px;height:1px;background:#999"></div><div class="abs" style="left:30px;top:19px;width:24px;height:1px;background:#888"></div><div class="abs" style="left:41px;top:24px;width:26px;height:1.5px;background:#5b7fc4"></div>
    <div class="abs" style="left:4px;top:37px;width:44px;height:1px;background:#777"></div><div class="abs" style="left:4px;top:39.5px;width:40px;height:1px;background:#999"></div><div class="abs" style="left:4px;top:42px;width:34px;height:1px;background:#888"></div><div class="abs" style="left:4px;top:46px;width:36px;height:1px;background:#999"></div><div class="abs" style="left:4px;top:48.5px;width:22px;height:1px;background:#888"></div><div class="abs" style="left:15px;top:51.5px;width:19px;height:1.5px;background:#5b7fc4"></div>
    <div class="abs" style="left:55px;top:37px;width:42px;height:1px;background:#777"></div><div class="abs" style="left:55px;top:39.5px;width:40px;height:1px;background:#888"></div><div class="abs" style="left:55px;top:42px;width:28px;height:1px;background:#999"></div><div class="abs" style="left:66px;top:51.5px;width:19px;height:1.5px;background:#5b7fc4"></div>
    <div class="abs" style="left:0;top:56.500px;width:104px;height:2px;background:#5b82cc"></div>
  </div>
  <svg class="abs" style="left:120.5px;top:295.5px" width="9" height="9" viewBox="0 0 9 9"><path d="M4.500 0.300 L8.300 1.800 L7.800 6.200 L4.500 8.700 L1.200 6.200 L0.700 1.800Z" fill="#2f9b7a"/><path d="M2.500 3 L4.500 2 L6.500 3 L6.300 5.500 L4.500 6.800 L2.700 5.500Z" fill="#e8dc6a"/><circle cx="4.500" cy="4.300" r="1.100" fill="#2a6fa8"/></svg>
  <!-- thumb 4 -->
  <div class="abs" style="left:27.500px;top:368.200px;width:104px;height:58.500px;background:#fff;overflow:hidden">
    <div class="abs" style="left:0;top:0;width:104px;height:1px;background:#6f8fcf"></div>
    <div class="abs" style="left:6px;top:3px;width:29px;height:3px;background:#999;opacity:.7"></div>
    <div class="abs" style="left:42px;top:9.5px;width:14px;height:1px;background:#555"></div><div class="abs" style="left:1px;top:12px;width:54px;height:1px;background:#999"></div><div class="abs" style="left:3px;top:15.5px;width:88px;height:1px;background:#888"></div><div class="abs" style="left:3px;top:18px;width:22px;height:1px;background:#bbb"></div><div class="abs" style="left:3px;top:21px;width:85px;height:1px;background:#777"></div><div class="abs" style="left:3px;top:24px;width:58px;height:1px;background:#aaa"></div><div class="abs" style="left:3px;top:26.5px;width:66px;height:1px;background:#888"></div>
    <div class="abs" style="left:42px;top:31.5px;width:14px;height:1px;background:#555"></div><div class="abs" style="left:3px;top:34.5px;width:90px;height:1px;background:#888"></div><div class="abs" style="left:3px;top:37px;width:14px;height:1px;background:#bbb"></div><div class="abs" style="left:3px;top:39.5px;width:74px;height:1px;background:#999"></div><div class="abs" style="left:3px;top:42px;width:63px;height:1px;background:#aaa"></div><div class="abs" style="left:3px;top:44.5px;width:74px;height:1px;background:#bbb"></div>
    <div class="abs" style="left:42px;top:48px;width:14px;height:1px;background:#666"></div><div class="abs" style="left:3px;top:51px;width:72px;height:1px;background:#aaa"></div><div class="abs" style="left:3px;top:53.5px;width:82px;height:1px;background:#999"></div>
    <div class="abs" style="left:0;top:56px;width:104px;height:2.500px;background:#5560c0"></div>
  </div>
  <svg class="abs" style="left:120.5px;top:371px" width="9" height="9" viewBox="0 0 9 9"><path d="M4.500 0.300 L8.300 1.800 L7.800 6.200 L4.500 8.700 L1.200 6.200 L0.700 1.800Z" fill="#2f9b7a"/><path d="M2.500 3 L4.500 2 L6.500 3 L6.300 5.500 L4.500 6.800 L2.700 5.500Z" fill="#e8dc6a"/><circle cx="4.500" cy="4.300" r="1.100" fill="#2a6fa8"/></svg>
  <!-- thumb 5 -->
  <div class="abs" style="left:27.500px;top:443.600px;width:104px;height:58.500px;background:#fff;overflow:hidden">
    <div class="abs" style="left:0;top:0;width:104px;height:1px;background:#6f8fcf"></div>
    <div class="abs" style="left:24px;top:3px;width:56px;height:3px;background:#999;opacity:.7"></div>
    <div class="abs" style="left:9px;top:16.5px;width:42px;height:1px;background:#555"></div><div class="abs" style="left:52px;top:16.5px;width:20px;height:1px;background:#777"></div>
    <div class="abs" style="left:9px;top:19.5px;width:36px;height:1px;background:#666"></div><div class="abs" style="left:47px;top:19.5px;width:30px;height:1px;background:#d8506a"></div>
    <div class="abs" style="left:9px;top:23px;width:52px;height:1px;background:#777"></div><div class="abs" style="left:62px;top:23px;width:24px;height:1px;background:#d8707f"></div>
    <div class="abs" style="left:9px;top:26px;width:66px;height:1px;background:#888"></div>
    <div class="abs" style="left:9px;top:29px;width:26px;height:1px;background:#d8506a"></div>
    <div class="abs" style="left:9px;top:32px;width:32px;height:1px;background:#666"></div><div class="abs" style="left:42px;top:32px;width:8px;height:1px;background:#d8506a"></div>
    <div class="abs" style="left:9px;top:35.5px;width:26px;height:1px;background:#666"></div><div class="abs" style="left:36px;top:35.5px;width:54px;height:1px;background:#d8506a"></div>
    <div class="abs" style="left:9px;top:38.5px;width:16px;height:1px;background:#d8506a"></div>
    <div class="abs" style="left:9px;top:41.5px;width:72px;height:1px;background:#777"></div>
    <div class="abs" style="left:9px;top:45px;width:13px;height:1px;background:#d8506a"></div>
    <div class="abs" style="left:0;top:56px;width:104px;height:2.500px;background:#5560c0"></div>
  </div>
  <svg class="abs" style="left:120.5px;top:446.5px" width="9" height="9" viewBox="0 0 9 9"><path d="M4.500 0.300 L8.300 1.800 L7.800 6.200 L4.500 8.700 L1.200 6.200 L0.700 1.800Z" fill="#2f9b7a"/><path d="M2.500 3 L4.500 2 L6.500 3 L6.300 5.500 L4.500 6.800 L2.700 5.500Z" fill="#e8dc6a"/><circle cx="4.500" cy="4.300" r="1.100" fill="#2a6fa8"/></svg>
  <!-- thumb 6 (cut off) -->
  <div class="abs" style="left:27.500px;top:519px;width:104px;height:34px;background:#fff;overflow:hidden">
    <div class="abs" style="left:0;top:0;width:104px;height:1px;background:#6f8fcf"></div>
    <div class="abs" style="left:25px;top:3px;width:54px;height:3px;background:#999;opacity:.7"></div>
    <svg class="abs" style="left:46px;top:11px" width="12" height="10" viewBox="0 0 12 10"><path d="M6 0.500 L11.500 3.500 L6 6.500 L0.500 3.500Z" fill="#222"/><path d="M3 5 V8 Q6 9.800 9 8 V5 L6 6.800Z" fill="#222"/><path d="M10.800 3.800 V8" stroke="#222" stroke-width="0.600"/></svg>
    <div class="abs" style="left:49px;top:21px;width:6px;height:14px;background:#7ea0dc"></div>
    <div class="abs" style="left:51px;top:21px;width:2px;height:14px;background:#2f55a5"></div>
    <div class="abs" style="left:16px;top:22px;width:32px;height:4px;background:#4472c4"></div>
    <div class="abs" style="left:16px;top:30px;width:32px;height:4px;background:#4472c4"></div>
    <div class="abs" style="left:56px;top:26px;width:41px;height:4px;background:#e08a3e"></div>
    <div class="abs" style="left:56px;top:33px;width:41px;height:2px;background:#e08a3e"></div>
  </div>
  <svg class="abs" style="left:120.5px;top:522px" width="9" height="9" viewBox="0 0 9 9"><path d="M4.500 0.300 L8.300 1.800 L7.800 6.200 L4.500 8.700 L1.200 6.200 L0.700 1.800Z" fill="#2f9b7a"/><path d="M2.500 3 L4.500 2 L6.500 3 L6.300 5.500 L4.500 6.800 L2.700 5.500Z" fill="#e8dc6a"/><circle cx="4.500" cy="4.300" r="1.100" fill="#2a6fa8"/></svg>
  <div class="abs" style="left:250px;top:134px;width:725px;height:409px;background:#fff;border:1px solid #d0d0d0"></div>
  <div class="abs sl" id="s-title" style="top:240.500px;font-size:43.400px;transform:scaleX(0.905)">PEMBEKALAN PRA-KKN</div>
  <div class="abs sl b" id="s-sub" style="top:330px;font-size:20.700px">DPL Kecamtan Adiluwih</div>
  <div class="abs sl b" id="s-l1" style="top:401.800px;font-size:20.500px;transform:scaleX(1.02)">Kecamatan Adiluwih</div>
  <div class="abs sl b" id="s-l2" style="top:435.200px;font-size:20.500px;transform:scaleX(1.005)">Kabupaten Pringsewu</div>
  <div class="abs sl b" id="s-l3" style="top:468px;font-size:20.500px;transform:scaleX(1.055)">2026</div>
  <svg class="abs" style="left:0;top:0" width="1073" height="572"><polyline points="538.4,349.6 539.9,351.0 541.4,349.6 542.9,351.0 544.4,349.6 545.9,351.0 547.4,349.6 548.9,351.0 550.4,349.6 551.9,351.0 553.4,349.6 554.9,351.0 556.4,349.6 557.9,351.0 559.4,349.6 560.9,351.0 562.4,349.6 563.9,351.0 565.4,349.6 566.9,351.0 568.4,349.6 569.9,351.0 571.4,349.6 572.9,351.0 574.4,349.6 575.9,351.0 577.4,349.6 578.9,351.0 580.4,349.6 581.9,351.0 583.4,349.6 584.9,351.0 586.4,349.6 587.9,351.0 589.4,349.6 590.9,351.0 592.4,349.6 593.9,351.0 595.4,349.6 596.9,351.0 598.4,349.6 599.9,351.0 601.4,349.6 602.9,351.0 604.4,349.6 605.9,351.0 607.4,349.6 608.9,351.0 610.4,349.6 611.9,351.0 613.4,349.6 614.9,351.0 616.4,349.6 617.9,351.0 619.4,349.6 620.9,351.0 622.4,349.6 623.9,351.0 625.4,349.6 626.9,351.0 628.4,349.6 629.9,351.0 631.4,349.6 632.9,351.0 634.4,349.6 635.9,351.0 637.4,349.6" fill="none" stroke="#e2575b" stroke-width="0.7" opacity="0.85"/><polyline points="642.8,349.6 644.3,351.0 645.8,349.6 647.3,351.0 648.8,349.6 650.3,351.0 651.8,349.6 653.3,351.0 654.8,349.6 656.3,351.0 657.8,349.6 659.3,351.0 660.8,349.6 662.3,351.0 663.8,349.6 665.3,351.0 666.8,349.6 668.3,351.0 669.8,349.6 671.3,351.0 672.8,349.6 674.3,351.0 675.8,349.6 677.3,351.0 678.8,349.6 680.3,351.0 681.8,349.6 683.3,351.0 684.8,349.6 686.3,351.0 687.8,349.6 689.3,351.0 690.8,349.6 692.3,351.0 693.8,349.6 695.3,351.0 696.8,349.6 698.3,351.0 699.8,349.6 701.3,351.0 702.8,349.6 704.3,351.0 705.8,349.6 707.3,351.0 708.8,349.6 710.3,351.0 711.8,349.6 713.3,351.0 714.8,349.6 716.3,351.0 717.8,349.6 719.3,351.0 720.8,349.6 722.3,351.0 723.8,349.6 725.3,351.0 726.8,349.6 728.3,351.0 729.8,349.6 731.3,351.0" fill="none" stroke="#e2575b" stroke-width="0.7" opacity="0.85"/><polyline points="510.9,421.1 512.4,422.5 513.9,421.1 515.4,422.5 516.9,421.1 518.4,422.5 519.9,421.1 521.4,422.5 522.9,421.1 524.4,422.5 525.9,421.1 527.4,422.5 528.9,421.1 530.4,422.5 531.9,421.1 533.4,422.5 534.9,421.1 536.4,422.5 537.9,421.1 539.4,422.5 540.9,421.1 542.4,422.5 543.9,421.1 545.4,422.5 546.9,421.1 548.4,422.5 549.9,421.1 551.4,422.5 552.9,421.1 554.4,422.5 555.9,421.1 557.4,422.5 558.9,421.1 560.4,422.5 561.9,421.1 563.4,422.5 564.9,421.1 566.4,422.5 567.9,421.1 569.4,422.5 570.9,421.1 572.4,422.5 573.9,421.1 575.4,422.5 576.9,421.1 578.4,422.5 579.9,421.1 581.4,422.5 582.9,421.1 584.4,422.5 585.9,421.1 587.4,422.5 588.9,421.1 590.4,422.5 591.9,421.1 593.4,422.5 594.9,421.1 596.4,422.5 597.9,421.1 599.4,422.5 600.9,421.1 602.4,422.5 603.9,421.1 605.4,422.5 606.9,421.1 608.4,422.5 609.9,421.1 611.4,422.5 612.9,421.1 614.4,422.5 615.9,421.1 617.4,422.5 618.9,421.1 620.4,422.5 621.9,421.1" fill="none" stroke="#e2575b" stroke-width="0.7" opacity="0.85"/><polyline points="626.7,421.1 628.2,422.5 629.7,421.1 631.2,422.5 632.7,421.1 634.2,422.5 635.7,421.1 637.2,422.5 638.7,421.1 640.2,422.5 641.7,421.1 643.2,422.5 644.7,421.1 646.2,422.5 647.7,421.1 649.2,422.5 650.7,421.1 652.2,422.5 653.7,421.1 655.2,422.5 656.7,421.1 658.2,422.5 659.7,421.1 661.2,422.5 662.7,421.1 664.2,422.5 665.7,421.1 667.2,422.5 668.7,421.1 670.2,422.5 671.7,421.1 673.2,422.5 674.7,421.1 676.2,422.5 677.7,421.1 679.2,422.5 680.7,421.1 682.2,422.5 683.7,421.1 685.2,422.5 686.7,421.1 688.2,422.5 689.7,421.1 691.2,422.5 692.7,421.1 694.2,422.5 695.7,421.1 697.2,422.5 698.7,421.1 700.2,422.5 701.7,421.1 703.2,422.5 704.7,421.1 706.2,422.5 707.7,421.1 709.2,422.5 710.7,421.1 712.2,422.5 713.7,421.1 715.2,422.5 716.7,421.1" fill="none" stroke="#e2575b" stroke-width="0.7" opacity="0.85"/><polyline points="504.7,454.5 506.2,455.9 507.7,454.5 509.2,455.9 510.7,454.5 512.2,455.9 513.7,454.5 515.2,455.9 516.7,454.5 518.2,455.9 519.7,454.5 521.2,455.9 522.7,454.5 524.2,455.9 525.7,454.5 527.2,455.9 528.7,454.5 530.2,455.9 531.7,454.5 533.2,455.9 534.7,454.5 536.2,455.9 537.7,454.5 539.2,455.9 540.7,454.5 542.2,455.9 543.7,454.5 545.2,455.9 546.7,454.5 548.2,455.9 549.7,454.5 551.2,455.9 552.7,454.5 554.2,455.9 555.7,454.5 557.2,455.9 558.7,454.5 560.2,455.9 561.7,454.5 563.2,455.9 564.7,454.5 566.2,455.9 567.7,454.5 569.2,455.9 570.7,454.5 572.2,455.9 573.7,454.5 575.2,455.9 576.7,454.5 578.2,455.9 579.7,454.5 581.2,455.9 582.7,454.5 584.2,455.9 585.7,454.5 587.2,455.9 588.7,454.5 590.2,455.9 591.7,454.5 593.2,455.9 594.7,454.5 596.2,455.9 597.7,454.5 599.2,455.9 600.7,454.5 602.2,455.9 603.7,454.5 605.2,455.9 606.7,454.5 608.2,455.9 609.7,454.5 611.2,455.9 612.7,454.5" fill="none" stroke="#e2575b" stroke-width="0.7" opacity="0.85"/><polyline points="617.5,454.5 619.0,455.9 620.5,454.5 622.0,455.9 623.5,454.5 625.0,455.9 626.5,454.5 628.0,455.9 629.5,454.5 631.0,455.9 632.5,454.5 634.0,455.9 635.5,454.5 637.0,455.9 638.5,454.5 640.0,455.9 641.5,454.5 643.0,455.9 644.5,454.5 646.0,455.9 647.5,454.5 649.0,455.9 650.5,454.5 652.0,455.9 653.5,454.5 655.0,455.9 656.5,454.5 658.0,455.9 659.5,454.5 661.0,455.9 662.5,454.5 664.0,455.9 665.5,454.5 667.0,455.9 668.5,454.5 670.0,455.9 671.5,454.5 673.0,455.9 674.5,454.5 676.0,455.9 677.5,454.5 679.0,455.9 680.5,454.5 682.0,455.9 683.5,454.5 685.0,455.9 686.5,454.5 688.0,455.9 689.5,454.5 691.0,455.9 692.5,454.5 694.0,455.9 695.5,454.5 697.0,455.9 698.5,454.5 700.0,455.9 701.5,454.5 703.0,455.9 704.5,454.5 706.0,455.9 707.5,454.5 709.0,455.9 710.5,454.5 712.0,455.9 713.5,454.5 715.0,455.9 716.5,454.5 718.0,455.9 719.5,454.5 721.0,455.9" fill="none" stroke="#e2575b" stroke-width="0.7" opacity="0.85"/></svg>
  <!-- I-beam cursor -->
  <svg class="abs" style="left:656px;top:449px" width="9" height="14" viewBox="0 0 9 14"><path d="M1 1 Q3.500 1 4.500 2.500 Q5.500 1 8 1 M4.500 2.500 V11.500 M1 13 Q3.500 13 4.500 11.500 Q5.500 13 8 13 M3 7 H6" fill="none" stroke="#444" stroke-width="1"/></svg>
  <!-- right scrollbar -->
  <div class="abs" style="left:1060px;top:127px;width:13px;height:426px;background:#dcdcdc"></div>
  <div class="abs" style="left:1060px;top:128px;width:12px;height:11.500px;background:#fff;border:1px solid #bdbdbd"></div>
  <svg class="abs" style="left:1063px;top:131px" width="7" height="5"><path d="M0 4.500 L3.500 0.500 L7 4.500Z" fill="#555"/></svg>
  <div class="abs" style="left:1060px;top:139.500px;width:12px;height:13px;background:#fff;border:1px solid #bdbdbd"></div>
  <div class="abs" style="left:1060px;top:496px;width:12px;height:12px;background:#fff;border:1px solid #bdbdbd"></div>
  <svg class="abs" style="left:1063px;top:500px" width="7" height="5"><path d="M0 0.500 L3.500 4.500 L7 0.500Z" fill="#555"/></svg>
  <div class="abs" style="left:1060px;top:508px;width:13px;height:45px;background:#e9e9e9"></div>
  <svg class="abs" style="left:1063px;top:511px" width="7" height="8" viewBox="0 0 7 8"><path d="M0.500 3.500 L3.500 0.500 L6.500 3.500Z M0.500 7.500 L3.500 4.500 L6.500 7.500Z" fill="#555"/></svg>
  <svg class="abs" style="left:1063px;top:525px" width="7" height="8" viewBox="0 0 7 8"><path d="M0.500 0.500 L3.500 3.500 L6.500 0.500Z M0.500 4.500 L3.500 7.500 L6.500 4.500Z" fill="#555"/></svg>
  <div class="abs" style="left:1072px;top:127px;width:1px;height:445px;background:#f5f5f5"></div>

  
  <div id="ppt-status" class="abs">
    <div class="rt" style="left:6px;top:2px;font-size:9.500px;color:#555">Slide 1 of 30</div>
    <svg class="abs" style="left:668px;top:3px" width="12" height="11" viewBox="0 0 12 11"><path d="M3 0.500 H9 M0.500 4 H11.500 M0.500 6.500 H11.500 M0.500 9 H11.500" stroke="#666" stroke-width="1" fill="none"/></svg>
    <div class="rt" style="left:682px;top:2px;font-size:9.500px;color:#555">Notes</div>
    <svg class="abs" style="left:721px;top:3px" width="12" height="11" viewBox="0 0 12 11"><path d="M0.500 0.500 H11.500 V7.500 H5 L2.500 10 V7.500 H0.500Z" stroke="#666" stroke-width="1" fill="none"/></svg>
    <div class="rt" style="left:734.500px;top:2px;font-size:9.500px;color:#555">Comments</div>
    <div class="abs" style="left:792px;top:0;width:31px;height:16px;background:#c9c7c6"></div>
    <svg class="abs" style="left:802px;top:3px" width="12" height="10" viewBox="0 0 12 10" fill="none" stroke="#444" stroke-width="1"><rect x="0.500" y="0.500" width="11" height="9"/><rect x="3.500" y="2.500" width="6" height="4" fill="#777"/></svg>
    <svg class="abs" style="left:833px;top:3px" width="12" height="10" viewBox="0 0 12 10" fill="none" stroke="#555" stroke-width="1"><rect x="0.500" y="0.500" width="4" height="3.500"/><rect x="7" y="0.500" width="4" height="3.500"/><rect x="0.500" y="6" width="4" height="3.500"/><rect x="7" y="6" width="4" height="3.500"/></svg>
    <svg class="abs" style="left:864px;top:2px" width="13" height="11" viewBox="0 0 13 11" fill="none" stroke="#555" stroke-width="1"><path d="M6.500 1.500 V10 M0.500 0.800 Q4 0 6.500 1.500 Q9 0 12.500 0.800 V9.500 Q9 8.600 6.500 10 Q4 8.600 0.500 9.500Z"/><path d="M2 3 H5 M2 5 H5 M8 3 H11 M8 5 H11" stroke-width="0.700"/></svg>
    <svg class="abs" style="left:896px;top:2px" width="12" height="12" viewBox="0 0 12 12" fill="none" stroke="#555" stroke-width="1"><path d="M0.500 0.800 H11.500 M1.500 1 V6.500 H10.500 V1 M6 6.500 V10.500 M3.500 10.800 H8.500"/></svg>
    <div class="abs" style="left:921px;top:7px;width:6px;height:1px;background:#777"></div>
    <div class="abs" style="left:932px;top:7px;width:79px;height:1px;background:#a5a3a2"></div>
    <div class="abs" style="left:958px;top:2px;width:3px;height:11px;background:#555"></div>
    <div class="abs" style="left:1014px;top:7px;width:7px;height:1px;background:#777"></div><div class="abs" style="left:1017px;top:4px;width:1px;height:7px;background:#777"></div>
    <div class="rt" style="left:1030px;top:2px;font-size:9px;color:#555">72%</div>
    <svg class="abs" style="left:1057px;top:2px" width="13" height="12" viewBox="0 0 13 12" fill="none" stroke="#555" stroke-width="1"><rect x="3" y="2.500" width="7" height="7" rx="1"/><path d="M6.500 0 V2.500 M6.500 9.500 V12 M0 6 H3 M10 6 H13"/><path d="M5.500 1 L6.500 0 L7.500 1 M5.500 11 L6.500 12 L7.500 11 M1 5 L0 6 L1 7 M12 5 L13 6 L12 7" stroke-width="0.700"/></svg>
  </div>
</div>

<!-- BANNER -->
<div id="banner" class="abs">
  <svg class="abs" style="left:11px;top:18px" width="21" height="15" viewBox="0 0 21 15"><rect x="0.8" y="0.8" width="19.4" height="13.4" rx="3" fill="none" stroke="#f2f2f2" stroke-width="1.5"/><text x="10.5" y="11" text-anchor="middle" font-family="Liberation Sans" font-size="9" font-weight="bold" fill="#f2f2f2" letter-spacing="0.3">CC</text></svg>
  <div class="abs" id="bantxt" style="left:39px;top:16px;font-size:16px;letter-spacing:-0.6px;color:#f0f0f0;white-space:nowrap;line-height:20px">This meeting is being recorded</div>
  <svg class="abs" style="left:905px;top:15px" width="21" height="21" viewBox="0 0 21 21"><circle cx="10.5" cy="10.5" r="9" fill="none" stroke="#9a9da3" stroke-width="1.2"/><rect x="9.8" y="8.8" width="1.5" height="6.4" fill="#c9cbd0"/><circle cx="10.5" cy="6.2" r="1" fill="#c9cbd0"/></svg>
  <div class="abs" style="left:937px;top:11px;width:47px;height:29px;background:#0e72ed;border-radius:6px;color:#fff;font-weight:bold;font-size:16px;line-height:29px;text-align:center">OK</div>
</div>
<!-- TOOLTIP -->
<svg class="abs" style="left:643px;top:43px" width="14" height="8"><path d="M0 8 L7 1 L14 8Z" fill="#1f2125"/></svg>
<div id="tip" class="abs">
  <div class="abs" id="tiptxt" style="left:15.500px;top:8px;font-size:13px;letter-spacing:-0.09px;line-height:17px;color:#f3f3f3;white-space:nowrap">The shared content is fit to your screen. To see the<br>original size, click "Original size" in the menu.</div>
  <svg class="abs" style="left:316.500px;top:9px" width="13" height="13" viewBox="0 0 13 13"><path d="M1 1 L12 12 M12 1 L1 12" stroke="#8e9197" stroke-width="1.2"/></svg>
</div>

<!-- RIGHT PANEL -->
<!-- handle -->
<div class="abs" style="left:1084px;top:336px;width:3px;height:40px;background:#6d7176;border-radius:1.500px"></div>
<!-- R avatar -->
<div class="abs" style="left:1180px;top:159px;width:97px;height:97px;background:#ee6c05;border-radius:6px"></div>
<div class="abs" id="ravt" style="left:1179.500px;top:181.500px;width:97px;text-align:center;font-size:54px;line-height:1;color:#fff4e8;-webkit-text-stroke:0.6px #fff4e8;transform:scaleX(0.9)">R</div>
<div class="pill" style="left:1102.500px;top:258px;width:114.500px;height:18.500px"></div>
<svg class="abs" style="left:1105px;top:260.5px" width="14" height="14" viewBox="0 0 14 14"><rect x="4.600" y="1" width="4.800" height="7.600" rx="2.400" fill="#e8505c"/><path d="M2.600 6.500 C2.600 11.800 11.400 11.800 11.400 6.500 M7 10.600 V12.800 M4.600 12.800 H9.400" fill="none" stroke="#e8505c" stroke-width="1.100"/><path d="M1.500 13 L12.800 1" stroke="#26282e" stroke-width="2.600"/><path d="M1.500 13 L12.800 1" stroke="#e8505c" stroke-width="1.100"/></svg>
<svg class="abs" style="left:1124px;top:261px" width="12" height="14" viewBox="0 0 12 14"><path d="M3 0.500 H9 V2 H8.200 V6 L10.600 8.300 V9.600 H1.400 V8.300 L3.800 6 V2 H3Z" fill="#e6e6e6"/><rect x="5.400" y="9.600" width="1.200" height="4" fill="#e6e6e6"/></svg>
<div class="abs ptxt" style="left:1142.300px;top:260.700px;letter-spacing:0">Ria Zulva W.</div>
<!-- David video -->
<div class="abs" id="vid1" style="left:1100px;top:279px;width:256px;height:144px;border-radius:6px;overflow:hidden;background:#b9cf6a">
<svg class="abs" style="left:0;top:0" width="256" height="144" viewBox="0 0 256 144">
  <defs>
    <filter id="b4" x="-20%" y="-20%" width="140%" height="140%"><feGaussianBlur stdDeviation="4"/></filter>
    <filter id="b2" x="-20%" y="-20%" width="140%" height="140%"><feGaussianBlur stdDeviation="1.800"/></filter>
    <filter id="b1" x="-20%" y="-20%" width="140%" height="140%"><feGaussianBlur stdDeviation="1.300"/></filter>
    <linearGradient id="bg1" x1="0" y1="0" x2="0" y2="1"><stop offset="0" stop-color="#eef1e2"/><stop offset="0.180" stop-color="#e3ead0"/><stop offset="0.550" stop-color="#cfdf9c"/><stop offset="1" stop-color="#9cc04a"/></linearGradient>
  </defs>
  <rect width="256" height="144" fill="url(#bg1)"/>
  <g filter="url(#b4)">
    <rect x="-5" y="20" width="22" height="130" fill="#8fb24c"/>
    <rect x="14" y="14" width="22" height="100" fill="#e8eddc"/>
    <ellipse cx="30" cy="128" rx="34" ry="20" fill="#7daa38"/><rect x="-4" y="118" width="120" height="30" fill="#6f9e34"/>
    <rect x="38" y="26" width="60" height="124" fill="#b4d06c"/><rect x="62" y="0" width="30" height="60" fill="#c2d98a"/>
    <ellipse cx="180" cy="50" rx="40" ry="40" fill="#e6ead0"/>
    <ellipse cx="225" cy="93" rx="17" ry="17" fill="#eef2e6"/>
    <rect x="200" y="105" width="60" height="45" fill="#8dbb3e"/>
    <rect x="150" y="115" width="60" height="35" fill="#94bd45"/>
    <ellipse cx="246" cy="50" rx="14" ry="45" fill="#b9d36a"/>
  </g>
  <g filter="url(#b2)" fill="none" stroke-linecap="round">
    <path d="M80 0 C74 30 58 60 42 110 L34 144" stroke="#7fb13c" stroke-width="9"/>
    <path d="M92 0 C96 18 100 30 104 42" stroke="#6ea03a" stroke-width="7"/>
    <path d="M42 28 C40 60 36 80 38 110" stroke="#8cba3e" stroke-width="6"/>
    <path d="M52 58 C66 78 84 100 96 118" stroke="#4e9436" stroke-width="8"/>
    <path d="M50 72 C58 90 70 108 82 124" stroke="#5a9c3c" stroke-width="5"/>
    <path d="M76 40 C78 60 80 80 80 100" stroke="#86b840" stroke-width="7"/>
    <path d="M176 4 C186 28 200 48 212 66" stroke="#bcd34c" stroke-width="5"/>
    <path d="M222 2 C222 24 218 44 214 64" stroke="#a6c840" stroke-width="5"/>
    <path d="M204 70 C196 90 184 108 176 120" stroke="#5fa23c" stroke-width="8"/>
    <path d="M196 58 C186 66 174 76 166 84" stroke="#b4cf4a" stroke-width="5"/>
    <path d="M248 16 C252 40 254 60 254 84" stroke="#8fbe3c" stroke-width="6"/>
    <path d="M236 30 C236 44 234 56 232 66" stroke="#b0d048" stroke-width="5"/>
    <path d="M212 106 C214 120 216 132 216 144" stroke="#5a9c38" stroke-width="6"/>
    <path d="M4 100 C4 116 6 130 6 144" stroke="#4f8a34" stroke-width="7"/>
    <path d="M160 104 C158 110 156 114 154 118" stroke="#6aa83c" stroke-width="5"/>
  </g>
  <g filter="url(#b1)" fill="#f4f8ee" opacity="0.850"><circle cx="78" cy="20" r="1.600"/><circle cx="80" cy="39" r="1.800"/><circle cx="76" cy="50" r="1.500"/><circle cx="60" cy="34" r="1.700"/><circle cx="66" cy="17" r="1.400"/><circle cx="74" cy="82" r="1.300"/><circle cx="202" cy="68" r="1.600"/><circle cx="182" cy="92" r="1.400"/><circle cx="196" cy="78" r="1.200"/><circle cx="44" cy="24" r="2.200"/><circle cx="228" cy="56" r="1.600"/></g>
  <!-- person -->
  <g filter="url(#b1)">
    <path d="M50 144 C62 128 92 120 114 116 L150 113 C176 118 204 124 215 144Z" fill="#12308a"/>
    <path d="M112 112 H152 V144 H112Z" fill="#4a322e"/>
    <path d="M112 144 C114 128 126 124 134 126 C146 128 152 136 152 144Z" fill="#a8745f"/>
    <ellipse cx="130" cy="84" rx="31.500" ry="38" fill="#93604d"/>
    <ellipse cx="128" cy="60" rx="22" ry="12" fill="#a0705a" opacity="0.700"/>
    <path d="M99 84 C94 46 112 29 132 30 C150 31 160 46 160 60 C162 70 160 78 158 84 L154 62 C146 48 118 44 104 58Z" fill="#2b2221"/>
    <ellipse cx="160" cy="88" rx="3.500" ry="7" fill="#7a4a3c"/>
    <rect x="100" y="66.500" width="27" height="17.500" rx="5" fill="#8f8a92" fill-opacity="0.450" stroke="#3a2c2e" stroke-width="1.600"/>
    <rect x="132" y="64.500" width="22" height="17.500" rx="5" fill="#8f8a92" fill-opacity="0.450" stroke="#3a2c2e" stroke-width="1.600"/>
    <path d="M127 73 H132" stroke="#3a2c2e" stroke-width="1.800"/>
    <ellipse cx="128" cy="108" rx="20" ry="12" fill="#7a4a3c" opacity="0.600"/><ellipse cx="126" cy="103.500" rx="8.500" ry="3.600" fill="#733840"/>
    <path d="M117 101 C122 98 131 98 136 101" stroke="#4a2a28" stroke-width="1.500" fill="none"/>
    <path d="M113 116 C122 122 136 122 146 114" stroke="#3a2826" stroke-width="2.500" fill="none"/>
  </g>
</svg>
</div>
<div class="pill" style="left:1102.700px;top:402.300px;width:93px;background:rgba(34,38,40,.66)"></div>
<div class="abs ptxt" style="left:1106.300px;top:403.600px;font-size:13px;letter-spacing:-0.100px">David Chandra</div>
<!-- Florence tile -->
<div class="abs" id="vid2" style="left:1170px;top:527px;width:117px;height:117px;border-radius:6px;overflow:hidden;background:#d9b45a">
<svg class="abs" style="left:0;top:0" width="117" height="117" viewBox="0 0 117 117">
  <defs><filter id="c1" x="-20%" y="-20%" width="140%" height="140%"><feGaussianBlur stdDeviation="0.700"/></filter></defs>
  <g filter="url(#c1)">
  <rect width="117" height="117" fill="#d9b75e"/>
  <!-- ceiling -->
  <rect x="0" y="0" width="117" height="24" fill="#ddd6c8"/>
  <path d="M14 0 H117 V8 H34 V3 H14Z" fill="#cfc6b4"/>
  <rect x="28" y="12" width="89" height="8" fill="#f2efea"/>
  <rect x="40" y="5" width="75" height="4" fill="#eae6de"/>
  <rect x="22" y="22" width="95" height="7" fill="#c7a55c"/>
  <circle cx="36" cy="25" r="2.500" fill="#fff3c8"/><circle cx="76" cy="24" r="2.500" fill="#fff3c8"/><circle cx="94" cy="24" r="2.500" fill="#fff3c8"/><circle cx="110" cy="24" r="2.500" fill="#fff3c8"/>
  <!-- left wall -->
  <rect x="0" y="10" width="24" height="76" fill="#c9c0ac"/>
  <rect x="3" y="15" width="16.500" height="64" fill="#ecd98c"/>
  <rect x="5" y="17" width="12.500" height="60" fill="#f3e6a8"/>
  <rect x="20" y="12" width="3.500" height="72" fill="#d8d2c4"/>
  <!-- backdrop -->
  <rect x="24" y="29" width="93" height="44" fill="#d5a63c"/>
  <rect x="24" y="28" width="93" height="1.500" fill="#6b8a4a"/>
  <rect x="29" y="50" width="9" height="10" rx="2" fill="#3f9a58"/>
  <rect x="31" y="42" width="6" height="9" fill="#222"/>
  <ellipse cx="104" cy="50" rx="11" ry="9" fill="#e8e4d8"/>
  <rect x="93" y="56" width="23" height="4" rx="2" fill="#3f9a58"/>
  <rect x="98" y="44" width="6" height="10" fill="#20242a"/><rect x="107" y="44" width="6" height="10" fill="#2a2e4a"/>
  <rect x="98" y="62" width="14" height="3" fill="#e8dcae"/>
  <rect x="78" y="32" width="12" height="4" fill="#5a8a4a"/>
  <!-- lower -->
  <rect x="0" y="73" width="117" height="44" fill="#d9c7a4"/>
  <rect x="96" y="73" width="21" height="5" fill="#e8e2da"/>
  <rect x="0" y="86" width="117" height="4" fill="#a56f3e"/>
  <rect x="0" y="90" width="117" height="5" fill="#f1e3c6"/>
  <rect x="0" y="95" width="117" height="4" fill="#b07a46"/>
  <rect x="0" y="99" width="117" height="7" fill="#ead9b8"/>
  <rect x="0" y="106" width="117" height="11" fill="#dcc8a2"/>
  <path d="M103 99 L117 104 V117 H104Z" fill="#ee6a2a"/>
  <!-- person: hair back -->
  <path d="M40 66 C36 40 44 18 60 17 C76 16 82 34 82 50 C84 60 92 64 92 70 C90 80 84 84 76 82 L44 70Z" fill="#1f1a1b"/>
  <!-- shirt -->
  <path d="M19 117 C20 90 24 74 38 68 L48 63 L70 63 L82 68 C96 74 102 92 105 117Z" fill="#ececee"/>
  <path d="M58 74 V117" stroke="#d8d6d2" stroke-width="1"/>
  <path d="M30 92 H46 V104 H30Z M64 92 H80 V104 H64Z" fill="none" stroke="#dcdad6" stroke-width="1"/>
  <!-- neck -->
  <path d="M51 58 H67 V70 L59 77 L51 70Z" fill="#dcae94"/>
  <!-- face -->
  <ellipse cx="59" cy="47" rx="14.500" ry="18.500" fill="#e3b9a0"/>
  <!-- hair front -->
  <path d="M44 50 C42 30 50 20 62 21 C72 22 76 34 75 48 C72 38 66 30 58 28 C52 34 47 40 44 50Z" fill="#1f1a1b"/>
  <path d="M72 44 C76 56 74 66 78 72 C82 78 86 80 84 82 C78 84 72 82 70 76 C70 66 72 56 72 44Z" fill="#1f1a1b"/>
  <path d="M45 46 C43 56 42 62 38 66 L46 66Z" fill="#1f1a1b"/>
  <path d="M49 45 H56 M62 45 H69" stroke="#3a2a28" stroke-width="1.200"/>
  <path d="M54 56.500 Q59 59 64 56.500" stroke="#b85a5a" stroke-width="1.400" fill="none"/>
  </g>
</svg>
</div>
<div class="pill" style="left:1099.500px;top:637.500px;width:107.500px;height:19px;background:rgba(41,42,46,.8)"></div>
<svg class="abs" style="left:1102px;top:640px" width="14" height="14" viewBox="0 0 14 14"><rect x="4.600" y="1" width="4.800" height="7.600" rx="2.400" fill="#e8505c"/><path d="M2.600 6.500 C2.600 11.800 11.400 11.800 11.400 6.500 M7 10.600 V12.800 M4.600 12.800 H9.400" fill="none" stroke="#e8505c" stroke-width="1.100"/><path d="M1.500 13 L12.800 1" stroke="#26282e" stroke-width="2.600"/><path d="M1.500 13 L12.800 1" stroke="#e8505c" stroke-width="1.100"/></svg>
<div class="abs ptxt" style="left:1121.500px;top:641px;letter-spacing:0.050px">Florence Irene</div>
<!-- arrows -->
<svg class="abs" style="left:1103px;top:575px" width="12" height="20" viewBox="0 0 12 20"><path d="M10 1.800 L2.500 10 L10 18.200" fill="none" stroke="#fff" stroke-width="2.300" stroke-linecap="round" stroke-linejoin="round"/></svg>
<svg class="abs" style="left:1341px;top:575px" width="12" height="20" viewBox="0 0 12 20"><path d="M2 1.800 L9.500 10 L2 18.200" fill="none" stroke="#fff" stroke-width="2.300" stroke-linecap="round" stroke-linejoin="round"/></svg>


<!-- annotate button -->
<div class="abs" style="left:24px;top:607px;width:32px;height:32px;border-radius:50%;background:#232426"></div>
<svg class="abs" style="left:31px;top:613px" width="18" height="20" viewBox="0 0 18 20" fill="none" stroke="#22d673" stroke-width="1.300" stroke-linejoin="round"><path d="M2.200 11.800 L11.600 2.200 L15.800 6.200 L6.400 15.600 L2.200 15.600Z"/><path d="M9.400 4.400 L13.600 8.400"/><path d="M2 17.800 H16" stroke-width="1.500"/></svg>
<!-- ZOOM TOOLBAR -->
<div id="ztb" class="abs">
  <!-- audio -->
  <svg class="abs" style="left:38px;top:8px" width="28" height="28" viewBox="0 0 28 28" fill="none" stroke="#fff" stroke-width="1.400" stroke-linecap="round"><rect x="10.600" y="2.500" width="7.200" height="13.500" rx="3.600"/><path d="M7.200 11.500 V13 C7.200 21.500 21.200 21.500 21.200 13 V11.500"/><path d="M14.200 19.600 V24.800 M10 25 H18.400"/><path d="M3.300 25.300 L25 3" stroke="#000" stroke-width="4.500"/><path d="M3.300 25.300 L25 3" stroke="#e2215c" stroke-width="2.300"/></svg>
  <svg class="abs" style="left:79px;top:19px" width="10" height="7" viewBox="0 0 10 7"><path d="M1.200 5.500 L5 1.700 L8.800 5.500" fill="none" stroke="#f2f2f2" stroke-width="1.500" stroke-linecap="round" stroke-linejoin="round"/></svg>
  <!-- video -->
  <svg class="abs" style="left:130px;top:8px" width="30" height="28" viewBox="0 0 30 28" fill="none" stroke="#fff" stroke-width="1.400" stroke-linejoin="round"><rect x="3" y="7.800" width="15.600" height="13.200" rx="2.800"/><path d="M20.800 14.400 L27 9.600 V19.400Z"/><path d="M4 25.300 L26.500 3" stroke="#000" stroke-width="4.500" stroke-linecap="round"/><path d="M4 25.300 L26.500 3" stroke="#e2215c" stroke-width="2.300" stroke-linecap="round"/></svg>
  <svg class="abs" style="left:177px;top:19px" width="10" height="7" viewBox="0 0 10 7"><path d="M1.200 5.500 L5 1.700 L8.800 5.500" fill="none" stroke="#f2f2f2" stroke-width="1.500" stroke-linecap="round" stroke-linejoin="round"/></svg>
  <!-- participants -->
  <svg class="abs" style="left:454px;top:12px" width="21" height="20" viewBox="0 0 21 20" fill="none" stroke="#fff" stroke-width="1.400"><circle cx="6" cy="4.600" r="2.800"/><circle cx="14.600" cy="7.400" r="2.500"/><path d="M1.200 15 C1.200 11.600 3 10.200 6 10.200 C9 10.200 10.600 11.600 10.600 15 C10.600 16.800 9.600 17.400 8 17.400 H3.800 C2.200 17.400 1.200 16.800 1.200 15Z"/><path d="M10.900 13.200 C11.800 12.400 13 12.200 14.600 12.200 C17.600 12.200 19.400 13.200 19.400 15.600 C19.400 17 18.600 17.400 17.400 17.400 H11"/></svg>
  <div class="abs" style="left:480px;top:11px;font-size:12.500px;line-height:15px;color:#b4b4b4;letter-spacing:-0.600px">110</div>
  <svg class="abs" style="left:512px;top:19px" width="10" height="7" viewBox="0 0 10 7"><path d="M1.200 5.500 L5 1.700 L8.800 5.500" fill="none" stroke="#f2f2f2" stroke-width="1.500" stroke-linecap="round" stroke-linejoin="round"/></svg>
  <!-- chat -->
  <svg class="abs" style="left:561px;top:10px" width="25" height="24" viewBox="0 0 25 24" fill="none" stroke="#fff" stroke-width="1.400" stroke-linejoin="round"><path d="M7.500 5.200 C7.800 2.600 9.400 1.400 12 1.400 H18 C21.400 1.400 23 3 23 6 V9.600 C23 12.400 21.600 13.800 19.200 14"/><path d="M6 5.600 H13.600 C16.600 5.600 18.200 7.200 18.200 10.200 V14 C18.200 17 16.600 18.600 13.600 18.600 H10.600 L6.600 22 V18.600 H6 C3 18.600 1.400 17 1.400 14 V10.200 C1.400 7.200 3 5.600 6 5.600Z"/><circle cx="6.200" cy="12.200" r="0.900" fill="#fff" stroke="none"/><circle cx="9.800" cy="12.200" r="0.900" fill="#fff" stroke="none"/><circle cx="13.400" cy="12.200" r="0.900" fill="#fff" stroke="none"/></svg>
  <svg class="abs" style="left:602px;top:19px" width="10" height="7" viewBox="0 0 10 7"><path d="M1.200 5.500 L5 1.700 L8.800 5.500" fill="none" stroke="#f2f2f2" stroke-width="1.500" stroke-linecap="round" stroke-linejoin="round"/></svg>
  <!-- react -->
  <svg class="abs" style="left:646px;top:11px" width="26" height="22" viewBox="0 0 26 22" fill="none" stroke="#fff" stroke-width="1.400" stroke-linejoin="round"><path d="M12.400 20.400 C6 16 1 12 1.400 6.600 C1.800 2 8 -0.400 12.800 4.800 C17.200 0.400 23.600 1.600 24.400 6.600 C25.200 12 18.800 16.400 12.400 20.400Z"/></svg>
  <svg class="abs" style="left:682px;top:19px" width="10" height="7" viewBox="0 0 10 7"><path d="M1.200 5.500 L5 1.700 L8.800 5.500" fill="none" stroke="#f2f2f2" stroke-width="1.500" stroke-linecap="round" stroke-linejoin="round"/></svg>
  <!-- share -->
  <div class="abs" style="left:736px;top:12px;width:24px;height:20px;background:#21d96a;border-radius:4px"></div>
  <svg class="abs" style="left:741px;top:15px" width="14" height="14" viewBox="0 0 14 14"><path d="M7 12.500 V3 M2.600 7 L7 2.400 L11.400 7" fill="none" stroke="#000" stroke-width="2.400" stroke-linejoin="round" stroke-linecap="round"/></svg>
  <!-- AI companion -->
  <svg class="abs" style="left:831px;top:10px" width="24" height="24" viewBox="0 0 24 24"><defs><linearGradient id="aig" x1="0" y1="0" x2="1" y2="1"><stop offset="0" stop-color="#f4fbff"/><stop offset="1" stop-color="#a9ccd8"/></linearGradient></defs><path d="M10.500 2.500 C11.500 8.800 13.700 11 20 12.500 C13.700 14 11.500 16.200 10.500 22.500 C9.500 16.200 7.300 14 1 12.500 C7.300 11 9.500 8.800 10.500 2.500Z" fill="url(#aig)"/><path d="M19.400 0.800 C19.800 3.200 20.600 4 23 4.400 C20.600 4.800 19.800 5.600 19.400 8 C19 5.600 18.200 4.800 15.800 4.400 C18.200 4 19 3.200 19.400 0.800Z" fill="#e8f4fa"/></svg>
  <!-- meeting info -->
  <svg class="abs" style="left:926px;top:9.500px" width="25" height="25" viewBox="0 0 25 25" fill="none"><circle cx="12.400" cy="12.200" r="10.800" stroke="#fff" stroke-width="1.500"/><path d="M10.200 10.800 H12.800 V17.200 M9.800 17.400 H15.600" stroke="#fff" stroke-width="1.700"/><circle cx="12.400" cy="7.200" r="1.400" fill="#fff"/></svg>
  <!-- more -->
  <svg class="abs" style="left:1017.500px;top:9.500px" width="25" height="25" viewBox="0 0 25 25" fill="none"><circle cx="12.400" cy="12.200" r="10.800" stroke="#fff" stroke-width="1.500"/><circle cx="7.400" cy="12.200" r="1.300" fill="#fff"/><circle cx="12.400" cy="12.200" r="1.300" fill="#fff"/><circle cx="17.400" cy="12.200" r="1.300" fill="#fff"/></svg>
  <!-- leave -->
  <svg class="abs" style="left:1305px;top:9px" width="27" height="26" viewBox="0 0 27 26" fill="none" stroke-linejoin="round" stroke-linecap="round"><path d="M10.500 1.800 H24.400 V19.600 L18.200 24 V6.400 L24.400 1.800" stroke="#e2215c" stroke-width="1.400"/><circle cx="9.400" cy="6.600" r="3" stroke="#fff" stroke-width="1.500"/><path d="M7.400 10.800 C4.600 11.600 3.200 13.200 2.600 15.400 C2.400 16.600 4 17 4.600 15.800 C5 14.800 5.600 14.200 6.600 13.800 L5.800 17.400 L2.600 22 C2 23.200 3.600 24.400 4.600 23.200 L8.200 18.600 L10.200 20 L10.600 23.200 C10.800 24.600 12.800 24.400 12.800 23 L12.400 18.800 L10.600 16.600 L11.200 14 C12 15 12.800 15.600 14.200 15.800 C15.600 15.800 15.600 14 14.400 13.800 C13.400 13.600 12.800 12.600 12 11.600 C11 10.600 9 10.400 7.400 10.800Z" stroke="#fff" stroke-width="1.300"/></svg>
  <div class="zl" style="left:52.2px;letter-spacing:0.15px">Audio</div><div class="zl" style="left:144.6px">Video</div><div class="zl" style="left:464.4px;letter-spacing:-0.1px">Participants</div><div class="zl" style="left:574.2px;letter-spacing:-0.4px">Chat</div><div class="zl" style="left:658.8px;letter-spacing:-0.6px">React</div><div class="zl" style="left:748.3px;letter-spacing:-0.5px">Share</div><div class="zl" style="left:843.6px">AI Companion</div><div class="zl" style="left:939.2px;letter-spacing:0.13px">Meeting info</div><div class="zl" style="left:1030.4px">More</div><div class="zl" style="left:1318.4px;letter-spacing:-0.7px">Leave</div>
</div>
<div class="abs" style="left:747px;top:718.700px;width:593px;height:1.500px;background:#f4f1ee"></div>

<!-- TASKBAR -->
<div id="task" class="abs">
  <!-- windows logo -->
  <svg class="abs" style="left:311.500px;top:11px" width="24" height="24" viewBox="0 0 24 24"><defs><linearGradient id="wg" x1="0" y1="0" x2="1" y2="1"><stop offset="0" stop-color="#7fe0ff"/><stop offset="1" stop-color="#1690e8"/></linearGradient></defs><path d="M0.500 0.500 H11.200 V11.200 H0.500Z M12.800 0.500 H23.500 V11.200 H12.800Z M0.500 12.800 H11.200 V23.500 H0.500Z M12.800 12.800 H23.500 V23.500 H12.800Z" fill="url(#wg)"/></svg>
  <!-- search -->
  <div class="abs" style="left:349px;top:8px;width:218px;height:30px;border-radius:15px;background:#f4f2f0;border:1px solid #e2dcd8"></div>
  <svg class="abs" style="left:359px;top:15px" width="16" height="16" viewBox="0 0 16 16" fill="none" stroke="#222" stroke-width="1.600" stroke-linecap="round"><circle cx="6.600" cy="6.600" r="5"/><path d="M10.400 10.400 L14.600 14.600"/></svg>
  <div class="abs" style="left:385.500px;top:14px;font-size:13.500px;line-height:18px;color:#666;letter-spacing:-0.350px">Search</div>
  <!-- task view -->
  <svg class="abs" style="left:579px;top:11px" width="26" height="24" viewBox="0 0 26 24"><rect x="0.500" y="7" width="17.500" height="15.500" rx="1.500" fill="#7f7874"/><rect x="7" y="7" width="11" height="10.500" fill="#c9c6c4"/><path d="M8.500 0.500 H24 Q25.500 0.500 25.500 2 V16 Q25.500 17.500 24 17.500 H18 V7 H7 V2 Q7 0.500 8.500 0.500Z" fill="#f6f6f6"/></svg>
  <!-- explorer -->
  <svg class="abs" style="left:623px;top:11px" width="26" height="24" viewBox="0 0 26 24"><path d="M1 3 Q1 1.500 2.500 1.500 H9 L11.500 4 H23.500 Q25 4 25 5.500 V8 H1Z" fill="#e2a21c"/><rect x="1" y="5.500" width="24" height="17" rx="1.500" fill="#fbd24a"/><path d="M1 18 H25 V21 Q25 22.500 23.500 22.500 H2.500 Q1 22.500 1 21Z" fill="#f2b52c"/><path d="M7.500 22.500 V16.500 Q7.500 15 9 15 H17 Q18.500 15 18.500 16.500 V22.500Z" fill="#2e8ad8"/><rect x="9.500" y="17" width="7" height="2" fill="#1a6fc0"/></svg>
  <!-- copilot -->
  <svg class="abs" style="left:668px;top:11px" width="24" height="23" viewBox="0 0 24 23"><defs><linearGradient id="cp1" x1="0" y1="0" x2="1" y2="1"><stop offset="0" stop-color="#2f8ef0"/><stop offset="0.500" stop-color="#38c6d8"/><stop offset="1" stop-color="#a8d84a"/></linearGradient><linearGradient id="cp2" x1="0" y1="0" x2="1" y2="1"><stop offset="0" stop-color="#6a6af0"/><stop offset="0.500" stop-color="#c86ae0"/><stop offset="1" stop-color="#f08a7a"/></linearGradient><linearGradient id="cp3" x1="0" y1="0" x2="0" y2="1"><stop offset="0" stop-color="#f8c84a"/><stop offset="1" stop-color="#f0703a"/></linearGradient></defs><path d="M5 1.500 Q7 0.500 10 1 L14 2 Q15 3 14.500 5 L12 14 Q11 17 8 17 H3 Q0.500 16 1 12.500 L3 4 Q3.500 2 5 1.500Z" fill="url(#cp1)"/><path d="M11 8 L13 4 Q14 2.500 16 3 L21 4.500 Q23.500 6 23 9 L21 18 Q20 21 17 21.500 L13 21 L9 19.500 Q8.500 18 9.500 16Z" fill="url(#cp2)"/><path d="M3 17 H9 Q10.500 17 11 15 L12 12 L13 16 Q13 21 9 22 L6 21.500 Q3 20 3 17Z" fill="url(#cp3)"/></svg>
  <!-- teams -->
  <svg class="abs" style="left:711px;top:11px" width="26" height="24" viewBox="0 0 26 24"><circle cx="14.500" cy="5" r="4" fill="#7b83eb"/><circle cx="22" cy="6.500" r="2.800" fill="#5059c9"/><path d="M18 10 H25 Q26 10 26 11 V16 Q26 20 22 20 Q19 20 18 17Z" fill="#5059c9"/><path d="M8 10 H19.500 Q20.500 10 20.500 11 V17.500 Q20.500 23.500 14.500 23.500 Q8 23.500 8 17.500Z" fill="#7b83eb"/><rect x="0.500" y="6.500" width="13" height="13" rx="1.500" fill="#4b53bc"/><path d="M4 10 H10 M7 10 V16.500" stroke="#fff" stroke-width="1.700"/></svg>
  <!-- firefox -->
  <svg class="abs" style="left:755.500px;top:10px" width="24" height="25" viewBox="0 0 24 25"><defs><radialGradient id="ff" cx="0.600" cy="0.250" r="0.900"><stop offset="0" stop-color="#ffe24a"/><stop offset="0.450" stop-color="#ff9a1a"/><stop offset="0.800" stop-color="#ff4a3a"/><stop offset="1" stop-color="#e82a6a"/></radialGradient></defs><path d="M12 3.500 C13 2.500 14.500 1.500 15.500 0.500 C16 3 19 4.500 21 8 C24.500 14.500 21 24 12 24 C3 24 -0.500 16 2 9.500 C2.500 8 3 6.500 3.200 5.500 C4 6.500 5 7.500 6 7.800 C7.500 5.500 9.500 4 12 3.500Z" fill="url(#ff)"/><circle cx="11.500" cy="14" r="5.500" fill="#7a3ad8"/><path d="M6 12 C8 9.500 12 9 15 11 C13 11 11 12 11.500 14 C12 16 15 16 16.500 14.500 C16 18 12 20 9 18.500 C6.500 17 5.500 14.500 6 12Z" fill="#ff7a2a"/><circle cx="11.800" cy="13.600" r="2.600" fill="#5a2ab8"/></svg>
  <!-- chrome -->
  <svg class="abs" style="left:799px;top:8px" width="30" height="36" viewBox="0 0 30 36"><circle cx="13" cy="16" r="12" fill="#fff"/><path d="M13 16 L2.600 10 A12 12 0 0 1 23.400 10Z" fill="#e33b2e"/><path d="M13 4 A12 12 0 0 1 23.400 10 H13Z" fill="#e33b2e"/><path d="M23.400 10 A12 12 0 0 1 13 28 L18.200 19 Z" fill="#fbc116"/><path d="M13 16 L23.400 10 L18.200 19Z" fill="#fbc116"/><path d="M2.600 10 A12 12 0 0 0 13 28 L18.200 19 L7.800 19Z" fill="#2da94f"/><circle cx="13" cy="16" r="5.600" fill="#fff"/><circle cx="13" cy="16" r="4.400" fill="#3f84f0"/><circle cx="22" cy="7" r="7" fill="#ef6c0a"/><text x="22" y="10" font-family="Liberation Sans" font-size="8" font-weight="bold" fill="#fff" text-anchor="middle">R</text><rect x="9.500" y="31.500" width="6.500" height="2.500" rx="1.200" fill="#9b8f89"/></svg>
  <!-- M365 -->
  <svg class="abs" style="left:843px;top:11px" width="27" height="25" viewBox="0 0 27 25"><defs><linearGradient id="m1" x1="0" y1="0" x2="1" y2="1"><stop offset="0" stop-color="#2f7af0"/><stop offset="0.500" stop-color="#38c0d8"/><stop offset="1" stop-color="#c8e04a"/></linearGradient><linearGradient id="m2" x1="0" y1="0" x2="1" y2="1"><stop offset="0" stop-color="#5a5af0"/><stop offset="0.600" stop-color="#d06ae0"/><stop offset="1" stop-color="#f09a8a"/></linearGradient></defs><path d="M6 2 Q8 0.500 11 1 L15 2 L12 13 Q11 16 8 16 H3 Q0.500 15 1.500 12 L4 4 Q4.500 2.500 6 2Z" fill="url(#m1)"/><path d="M12 9 L14 3 Q15 1.500 17 2 L22 4 Q25 6 24 9 L22 15 Q21 17 18 17 H10Z" fill="url(#m2)"/><rect x="4" y="15.500" width="22" height="8.500" fill="#111"/><text x="15" y="22.600" font-family="Liberation Sans" font-size="7.500" font-weight="bold" fill="#fff" text-anchor="middle" letter-spacing="0.200">M365</text></svg>
  <!-- xampp -->
  <svg class="abs" style="left:888px;top:10px" width="24" height="25" viewBox="0 0 24 25"><rect x="0" y="0.500" width="24" height="24" rx="3" fill="#ee7a1c"/><rect x="1" y="1.500" width="22" height="22" rx="2" fill="none" stroke="#d9691a" stroke-width="1"/><path d="M5 8 Q5 5.500 7.500 5.500 Q9.500 5.500 10.500 7.500 L12 9.500 L13.500 7.500 Q14.500 5.500 16.500 5.500 Q19 5.500 19 8 V10 Q19 11.500 17.500 12.500 Q19 13.500 19 15 V17 Q19 19.500 16.500 19.500 Q14.500 19.500 13.500 17.500 L12 15.500 L10.500 17.500 Q9.500 19.500 7.500 19.500 Q5 19.500 5 17 V15 Q5 13.500 6.500 12.500 Q5 11.500 5 10Z" fill="#fff"/><path d="M8.500 10.500 H15.500 V14.500 H8.500Z" fill="#ee7a1c"/><path d="M7 12.500 H17" stroke="#ee7a1c" stroke-width="1.200"/></svg>
  <!-- zoom tile -->
  <div class="abs" style="left:924px;top:3px;width:39px;height:41px;border-radius:5px;background:#644535;border:1px solid #735444"></div>
  <div class="abs" style="left:932px;top:11px;width:24px;height:24px;border-radius:9px;background:linear-gradient(160deg,#3a7cf8,#0b4fd8)"></div>
  <div class="abs" style="left:932px;top:15.500px;width:24px;text-align:center;font-size:12.500px;font-weight:bold;color:#fff;letter-spacing:-0.600px;line-height:15px">zm</div>
  <div class="abs" style="left:936px;top:39.500px;width:16px;height:3px;border-radius:1.500px;background:#d9c08c"></div>
  <!-- settings tile -->
  <div class="abs" style="left:968px;top:3px;width:40px;height:41px;border-radius:5px;background:#84464b"></div>
  <svg class="abs" style="left:975px;top:10px" width="26" height="26" viewBox="0 0 26 26"><g fill="#8a9099"><circle cx="13" cy="13" r="9.500"/><g id="gt"><rect x="10" y="0.500" width="6" height="6" rx="1.500"/><rect x="10" y="19.500" width="6" height="6" rx="1.500"/></g><use href="#gt" transform="rotate(60 13 13)"/><use href="#gt" transform="rotate(120 13 13)"/></g><circle cx="13" cy="13" r="5.600" fill="#e8ecf2"/><circle cx="13" cy="13" r="4" fill="#1f6ad0"/></svg>
  <div class="abs" style="left:984.500px;top:39.500px;width:6.500px;height:3px;border-radius:1.500px;background:#ff8fa8"></div>
  <!-- tray -->
  <svg class="abs" style="left:1077px;top:18px" width="14" height="9" viewBox="0 0 14 9"><path d="M1.800 7.500 L7 2.300 L12.200 7.500" fill="none" stroke="#fff" stroke-width="1.500" stroke-linecap="round" stroke-linejoin="round"/></svg>
  <svg class="abs" style="left:1106px;top:15px" width="19" height="17" viewBox="0 0 19 17"><path d="M4 12.500 C0.500 12.500 0.500 8 3.800 7.600 C4 3.500 9.500 1.500 12 5 C15.500 4 17.500 8 15.500 10 L13 12.500Z" fill="#b8b4b2"/><path d="M6 8 C7 5 11 4 13 6.500 L8 12.500 H5Z" fill="#e8e6e4"/><circle cx="13.600" cy="12" r="4.300" fill="#d8202c"/><path d="M11.900 10.300 L15.300 13.700 M15.300 10.300 L11.900 13.700" stroke="#fff" stroke-width="1.100"/></svg>
  <svg class="abs" style="left:1139px;top:13px" width="19" height="19" viewBox="0 0 19 19" fill="none" stroke="#fff" stroke-width="1.400" stroke-linecap="round" stroke-linejoin="round"><path d="M2.500 8.500 C3 4.500 6 2.500 9.500 2.500 C12 2.500 14 3.600 15.200 5.400 M15.600 2 V5.600 H12"/><path d="M4 16 L2 13.600 M2 13.600 L5.400 13 M2 13.600 C3 15.400 5 16.600 7.500 16.800"/><circle cx="12.800" cy="14" r="4.300" fill="#1a78e8" stroke="none"/></svg>
  <svg class="abs" style="left:1173px;top:14px" width="14" height="18" viewBox="0 0 14 18" fill="none" stroke="#c9aa6a" stroke-width="1.300" stroke-linecap="round"><rect x="4.400" y="1" width="5.200" height="9.600" rx="2.600"/><path d="M1.600 8 C1.600 15 12.400 15 12.400 8 M7 13.400 V16.600"/></svg>
  <svg class="abs" style="left:1203px;top:16px" width="18" height="14" viewBox="0 0 18 14" fill="none" stroke="#fff" stroke-width="1.400" stroke-linecap="round"><path d="M1 5 C5.500 0.500 12.500 0.500 17 5"/><path d="M3.600 7.800 C6.800 4.800 11.200 4.800 14.400 7.800"/><path d="M6.200 10.400 C7.800 9 10.200 9 11.800 10.400"/><circle cx="9" cy="12.300" r="1.100" fill="#fff" stroke="none"/></svg>
  <svg class="abs" style="left:1227px;top:15px" width="19" height="16" viewBox="0 0 19 16" fill="none" stroke="#fff" stroke-width="1.300" stroke-linecap="round" stroke-linejoin="round"><path d="M1.200 5.600 H4 L8 2 V14 L4 10.400 H1.200Z"/><path d="M10.600 5.600 C11.800 7 11.800 9 10.600 10.400"/><path d="M12.800 3.800 C15 6 15 10 12.800 12.200"/><path d="M15 2 C18.200 5.200 18.200 10.800 15 14"/></svg>
  <svg class="abs" style="left:1251px;top:18px" width="19" height="11" viewBox="0 0 19 11"><rect x="0.800" y="0.800" width="15" height="9.400" rx="2.400" fill="none" stroke="#fff" stroke-width="1.300"/><rect x="2.800" y="2.800" width="11" height="5.400" rx="1" fill="#fff"/><path d="M17.400 3.800 V7.200" stroke="#fff" stroke-width="1.600" stroke-linecap="round"/></svg>
  <div class="abs" id="tm" style="right:19.300px;top:8.300px;font-size:11.500px;line-height:14px;color:#fff;letter-spacing:-0.160px;white-space:nowrap">10.06</div>
  <div class="abs" id="dt" style="right:19.300px;top:23.500px;font-size:11.500px;line-height:14px;color:#fff;letter-spacing:0.400px;white-space:nowrap">03/01/2026</div>
</div>

</div>
</body>
</html>
